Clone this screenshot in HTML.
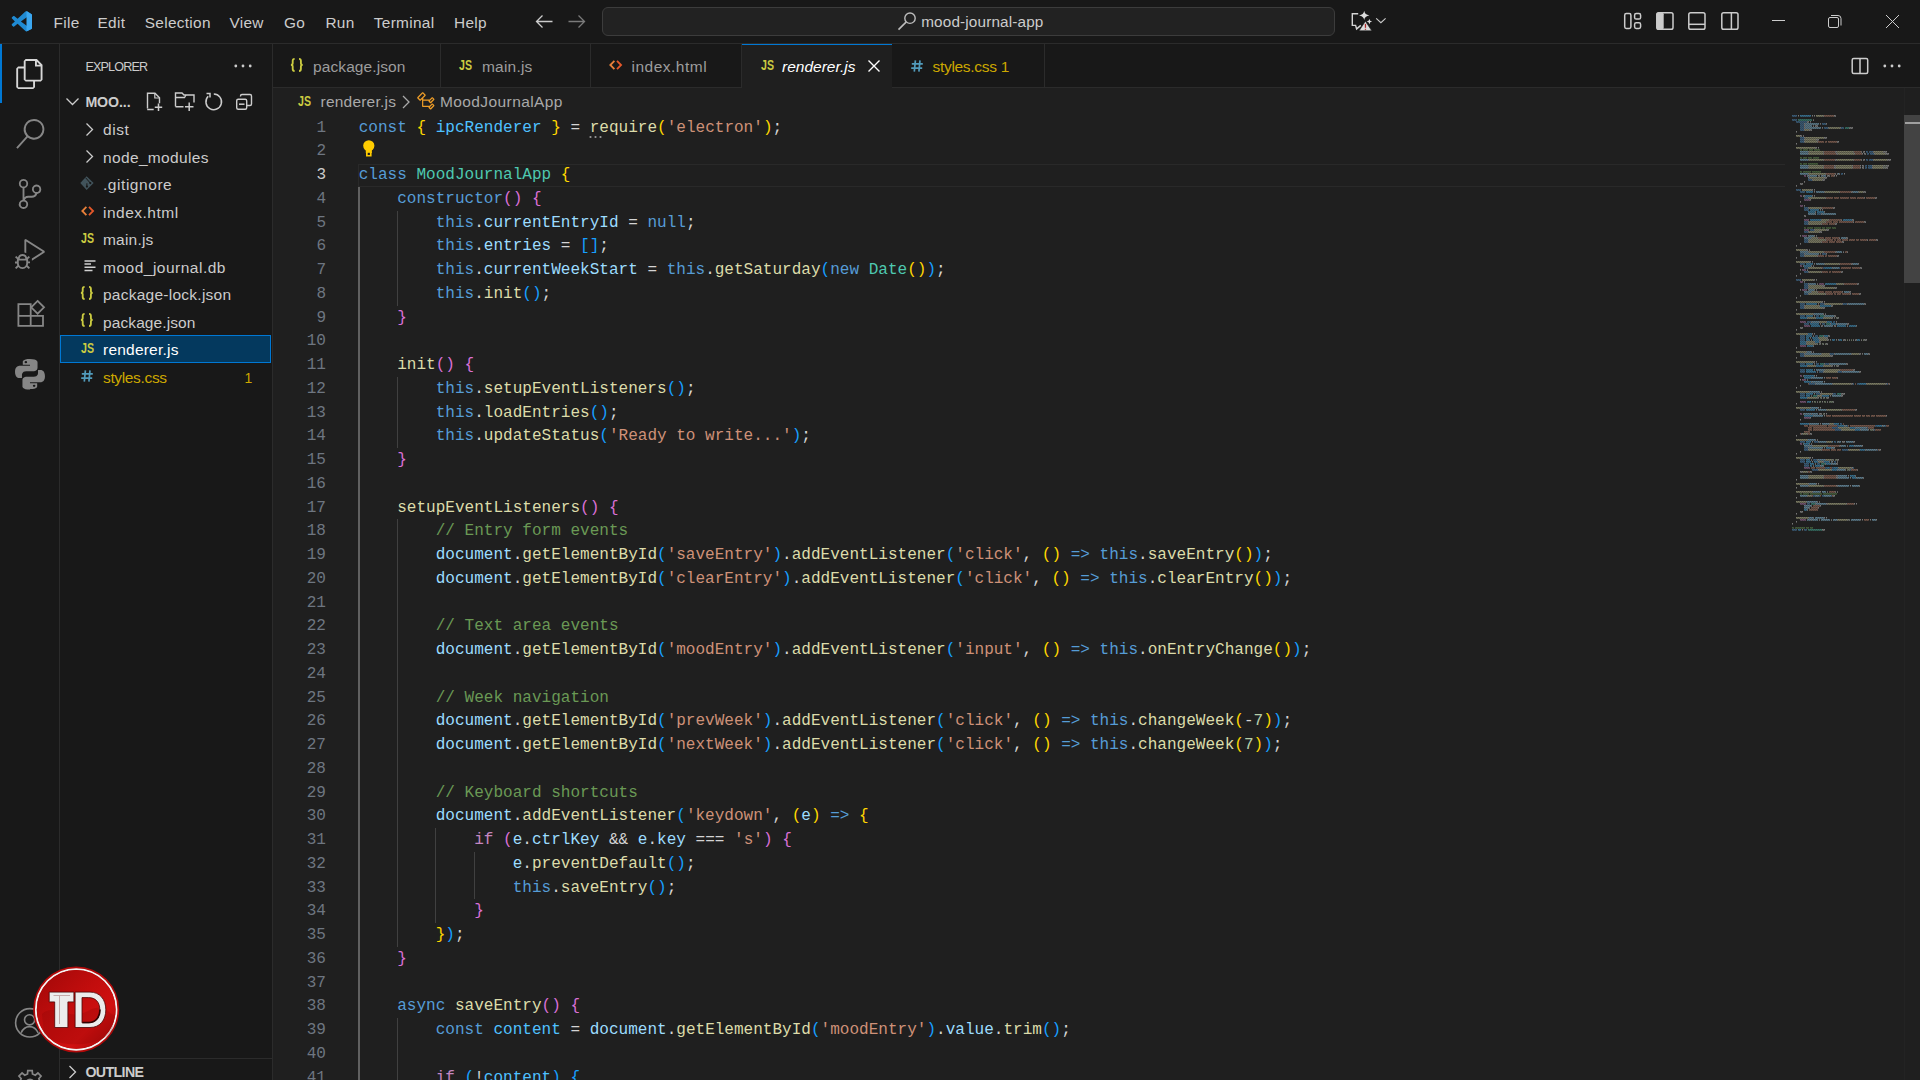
<!DOCTYPE html>
<html><head><meta charset="utf-8"><title>renderer.js - mood-journal-app</title>
<style>
*{margin:0;padding:0;box-sizing:content-box}
html,body{width:1920px;height:1080px;overflow:hidden;background:#181818;font-family:"Liberation Sans", sans-serif;}
.tx{position:absolute;white-space:pre;}
.box{position:absolute}
.ic{position:absolute;overflow:visible}
#editor{position:absolute;left:273px;top:88px;width:1647px;height:992px;background:#1f1f1f}
#gutter .num{position:absolute;left:280px;width:46px;text-align:right;font:16.04px/23.75px "Liberation Mono", monospace;color:#6e7681}
#gutter .num.act{color:#cccccc}
#code .ln{position:absolute;left:358.75px;white-space:pre;font:16.04px/23.75px "Liberation Mono", monospace;color:#d4d4d4}
.guide{position:absolute;width:1px;background:#404040}
.guide.act{background:#606060;width:2px}
.k{color:#569cd6}.c{color:#c586c0}.s{color:#ce9178}.f{color:#dcdcaa}.v{color:#9cdcfe}.n{color:#4fc1ff}.ty{color:#4ec9b0}
.m{color:#6a9955}.p{color:#d4d4d4}.nu{color:#b5cea8}.b0{color:#ffd700}.b1{color:#da70d6}.b2{color:#179fff}
</style></head>
<body>
<div class="box" style="left:0;top:43px;width:1920px;height:1px;background:#2b2b2b"></div>
<div class="box" style="left:59px;top:44px;width:1px;height:1036px;background:#2b2b2b"></div>
<div class="box" style="left:272px;top:44px;width:1px;height:1036px;background:#2b2b2b"></div>
<div id="editor"></div>
<svg class="ic" style="left:11.00px;top:10.50px" width="22" height="21" viewBox="0 0 21 21">
<path d="M17.6 1.1 13.3 -0.9 5.3 6.4 1.9 3.8 0.4 4.6v11.8l1.5 0.8 3.4-2.6 8 7.3 4.3-2.1V1.1z" fill="#0065a9" opacity="0"/>
<path d="M15.4 0.3a1.3 1.3 0 0 0-1.5 0.25L6.1 7.7 2.7 5.1a0.9 0.9 0 0 0-1.1 0.05l-1.1 1a0.9 0.9 0 0 0 0 1.3L3.4 10.5 0.5 13.1a0.9 0.9 0 0 0 0 1.3l1.1 1a0.9 0.9 0 0 0 1.1 0.05l3.4-2.6 7.8 7.15a1.3 1.3 0 0 0 1.5 0.25l4.3-2.05A1.3 1.3 0 0 0 20.5 16.9V4.1a1.3 1.3 0 0 0-0.75-1.15z" fill="#1f8ad2"/>
<path d="M15.6 15.1 9.4 10.5l6.2-4.6z" fill="#181818"/>
<path d="M15.4 0.3 19.75 2.95A1.3 1.3 0 0 1 20.5 4.1V16.9a1.3 1.3 0 0 1-0.75 1.15L15.4 20.2a1.3 1.3 0 0 1-0.4 0.1V0.2z" fill="#3ba7f0"/>
</svg>
<div class="tx" style="left:53.60px;top:13.36px;font-size:15.40px;line-height:20px;color:#cccccc;letter-spacing:0.30px;">File</div>
<div class="tx" style="left:97.50px;top:13.36px;font-size:15.40px;line-height:20px;color:#cccccc;letter-spacing:0.30px;">Edit</div>
<div class="tx" style="left:144.80px;top:13.36px;font-size:15.40px;line-height:20px;color:#cccccc;letter-spacing:0.30px;">Selection</div>
<div class="tx" style="left:229.40px;top:13.36px;font-size:15.40px;line-height:20px;color:#cccccc;letter-spacing:0.30px;">View</div>
<div class="tx" style="left:284.10px;top:13.36px;font-size:15.40px;line-height:20px;color:#cccccc;letter-spacing:0.30px;">Go</div>
<div class="tx" style="left:325.40px;top:13.36px;font-size:15.40px;line-height:20px;color:#cccccc;letter-spacing:0.30px;">Run</div>
<div class="tx" style="left:373.80px;top:13.36px;font-size:15.40px;line-height:20px;color:#cccccc;letter-spacing:0.30px;">Terminal</div>
<div class="tx" style="left:454.00px;top:13.36px;font-size:15.40px;line-height:20px;color:#cccccc;letter-spacing:0.30px;">Help</div>
<svg class="ic" style="left:534.00px;top:13.00px" width="20" height="17" viewBox="0 0 20 17"><path d="M2.5 8.5H18.5M8.5 2.5 2.5 8.5 8.5 14.5" stroke="#cccccc" stroke-width="1.3" fill="none"/></svg>
<svg class="ic" style="left:567.00px;top:13.00px" width="20" height="17" viewBox="0 0 20 17"><path d="M1.5 8.5H17.5M11.5 2.5 17.5 8.5 11.5 14.5" stroke="#7a7a7a" stroke-width="1.3" fill="none"/></svg>
<div class="box" style="left:602px;top:7px;width:731px;height:27px;border:1px solid #3c3c3c;border-radius:6px;background:#222222"></div>
<svg class="ic" style="left:896.00px;top:11.00px" width="22" height="20" viewBox="0 0 22 20"><circle cx="14" cy="7.2" r="5.2" stroke="#bdbdbd" stroke-width="1.4" fill="none"/><path d="M10.3 10.9 2.5 18.6" stroke="#bdbdbd" stroke-width="1.6"/></svg>
<div class="tx" style="left:921.20px;top:12.10px;font-size:15.30px;line-height:20px;color:#cccccc;letter-spacing:0.15px;">mood-journal-app</div>
<svg class="ic" style="left:1345.00px;top:6.00px" width="50" height="30" viewBox="0 0 50 30">
<path d="M13.2 7.7H7.3V19.4H10.6L11.6 22.9 15.8 19.4" stroke="#d4d4d4" stroke-width="1.4" fill="none" stroke-linejoin="miter"/>
<path d="M19.2 4.8Q19.7 8.8 24.4 9.4 19.7 10 19.2 14 18.7 10 14 9.4 18.7 8.8 19.2 4.8Z" fill="#dcdcdc"/>
<path d="M24.4 12.9Q24.7 15.3 27.1 15.6 24.7 15.9 24.4 18.3 24.1 15.9 21.7 15.6 24.1 15.3 24.4 12.9Z" fill="#dcdcdc"/>
<path d="M20.4 15.2 26.8 24.8H14.1Z" fill="#dcdcdc" stroke="#181818" stroke-width="0.6"/>
<rect x="19.8" y="17.9" width="1.3" height="3.9" fill="#a82828"/><rect x="19.8" y="22.8" width="1.3" height="1" fill="#a82828"/>
</svg>
<svg class="ic" style="left:1375.00px;top:16.00px" width="12" height="9" viewBox="0 0 12 9"><path d="M1.2 2.3 5.9 6.7 10.6 2.3" stroke="#cccccc" stroke-width="1.1" fill="none"/></svg>
<svg class="ic" style="left:1622.00px;top:11.00px" width="22" height="20" viewBox="0 0 22 20"><rect x="2.7" y="2.6" width="6.2" height="14.8" rx="1.6" stroke="#cccccc" stroke-width="1.5" fill="none"/><rect x="12.6" y="2.6" width="6" height="5.4" rx="1.6" stroke="#cccccc" stroke-width="1.5" fill="none"/><rect x="12.6" y="11.8" width="6" height="5.6" rx="1.6" stroke="#cccccc" stroke-width="1.5" fill="none"/></svg>
<svg class="ic" style="left:1654.00px;top:10.00px" width="22" height="22" viewBox="0 0 22 22"><rect x="2.8" y="2.8" width="16.2" height="16.4" rx="1.8" stroke="#cccccc" stroke-width="1.5" fill="none"/><rect x="2.5" y="2.5" width="7.2" height="17" rx="1.8" fill="#cccccc"/></svg>
<svg class="ic" style="left:1686.00px;top:10.00px" width="22" height="22" viewBox="0 0 22 22"><rect x="2.8" y="2.8" width="16.2" height="16.4" rx="1.8" stroke="#cccccc" stroke-width="1.5" fill="none"/><path d="M2.8 14.3H19" stroke="#cccccc" stroke-width="1.5"/></svg>
<svg class="ic" style="left:1719.00px;top:10.00px" width="22" height="22" viewBox="0 0 22 22"><rect x="2.8" y="2.8" width="16.2" height="16.4" rx="1.8" stroke="#cccccc" stroke-width="1.5" fill="none"/><path d="M12.4 2.8V19" stroke="#cccccc" stroke-width="1.5"/></svg>
<div class="box" style="left:1772px;top:20px;width:13px;height:1px;background:#cccccc"></div>
<svg class="ic" style="left:1826.00px;top:13.00px" width="18" height="17" viewBox="0 0 18 17"><rect x="2.5" y="4.5" width="10" height="10" rx="1.5" stroke="#cccccc" stroke-width="1" fill="none"/><path d="M5 2.5h7a3 3 0 0 1 3 3v7" stroke="#cccccc" stroke-width="1" fill="none"/></svg>
<svg class="ic" style="left:1884.00px;top:13.00px" width="17" height="17" viewBox="0 0 17 17"><path d="M2 2 15 15M15 2 2 15" stroke="#cccccc" stroke-width="1"/></svg>
<div class="box" style="left:0;top:44px;width:2px;height:59px;background:#0078d4"></div>
<svg class="ic" style="left:15.00px;top:58.70px" width="30" height="30" viewBox="0 0 24 24"><path d="M17.5 0h-9L7 1.5V6H2.5L1 7.5v15.07L2.5 24h12.07L16 22.57V18h4.7l1.3-1.43V4.5L17.5 0zm0 2.12l2.38 2.38H17.5V2.12zm-3 20.38h-12v-15H7v9.07L8.5 18h6v4.5zm6-6h-12v-15H16V6h4.5v10.5z" fill="#d7d7d7"/></svg>
<svg class="ic" style="left:14.75px;top:119.00px" width="30" height="30" viewBox="0 0 24 24"><path d="M15.25 0a8.25 8.25 0 0 0-6.18 13.72L1 22.88l1.12 1 8.05-9.12A8.251 8.251 0 1 0 15.25.01V0zm0 15a6.75 6.75 0 1 1 0-13.5 6.75 6.75 0 0 1 0 13.5z" fill="#868686"/></svg>
<svg class="ic" style="left:14.50px;top:179.30px" width="30" height="30" viewBox="0 0 24 24"><path d="M21.007 8.222A3.738 3.738 0 0 0 15.045 5.2a3.737 3.737 0 0 0 1.156 6.583 2.988 2.988 0 0 1-2.668 1.67h-2.99a4.456 4.456 0 0 0-2.989 1.165V7.4a3.737 3.737 0 1 0-1.494 0v9.117a3.776 3.776 0 1 0 1.816.099 2.99 2.99 0 0 1 2.668-1.667h2.99a4.484 4.484 0 0 0 4.223-3.039 3.736 3.736 0 0 0 3.25-3.687zM4.565 3.738a2.242 2.242 0 1 1 4.484 0 2.242 2.242 0 0 1-4.484 0zm4.484 16.441a2.242 2.242 0 1 1-4.484 0 2.242 2.242 0 0 1 4.484 0zm8.221-9.715a2.242 2.242 0 1 1 0-4.485 2.242 2.242 0 0 1 0 4.485z" fill="#868686"/></svg>
<svg class="ic" style="left:15.00px;top:239.00px" width="30" height="30" viewBox="0 0 24 24"><path d="M10.94 13.5l-1.32 1.32a3.73 3.73 0 0 0-7.24 0L1.06 13.5 0 14.56l1.72 1.72-.22.22V18H0v1.5h1.5v.08c.077.489.214.966.41 1.42L0 22.94 1.06 24l1.650-1.65A4.308 4.308 0 0 0 6 24a4.310 4.310 0 0 0 3.290-1.65L10.94 24 12 22.940 10.090 21c.198-.464.336-.951.410-1.450v-.1H12V18h-1.5v-1.5l-.22-.22L12 14.560l-1.060-1.060zM6 13.5a2.250 2.250 0 0 1 2.250 2.250h-4.5A2.250 2.250 0 0 1 6 13.5zm3 6a3.330 3.330 0 0 1-3 3 3.330 3.330 0 0 1-3-3v-2.250h6v2.250zm14.760-9.9v1.260L13.5 17.370V15.6l8.5-5.370L9 2v9.460a5.070 5.070 0 0 0-1.5-.720V.630L8.640 0l15.120 9.6z" fill="#868686"/></svg>
<svg class="ic" style="left:15.00px;top:297.00px" width="32" height="34" viewBox="0 0 32 34"><path d="M3.4 7.2h12.3v11.7H3.4zM3.4 18.9h12.3v10H3.4zM15.7 18.9H28v10H15.7z" stroke="#868686" stroke-width="1.8" fill="none"/><path d="M22.6 3.9 29 10.3 22.6 16.7 16.2 10.3z" stroke="#868686" stroke-width="1.8" fill="none"/></svg>
<svg class="ic" style="left:13.00px;top:355.00px" width="34" height="36" viewBox="0 0 34 36">
<g transform="translate(-1.54,1.76) scale(1.18,1.02)"><path d="M15.6 2.2c-6.4 0-6 2.8-6 2.8v2.9h6.1v0.9H7.2S3 8.3 3 14.7s3.7 6.2 3.7 6.2h2.2v-3s-0.1-3.7 3.6-3.7h6.1s3.5 0.1 3.5-3.4V5.6s0.5-3.4-6.5-3.4zm-3.4 2a1.1 1.1 0 1 1 0 2.2 1.1 1.1 0 0 1 0-2.2z" fill="#868686"/>
<path d="M15.8 31.6c6.4 0 6-2.8 6-2.8v-2.9h-6.1v-0.9h8.5s4.2 0.5 4.2-5.9-3.7-6.2-3.7-6.2h-2.2v3s0.1 3.7-3.6 3.7h-6.1s-3.5-0.1-3.5 3.4v5.8s-0.5 3.4 6.5 3.4zm3.4-2a1.1 1.1 0 1 1 0-2.2 1.1 1.1 0 0 1 0 2.2z" fill="#868686"/></g>
</svg>
<svg class="ic" style="left:14.00px;top:1007.00px" width="32" height="32" viewBox="0 0 32 32"><circle cx="15.8" cy="15.8" r="14.2" stroke="#868686" stroke-width="1.6" fill="none"/><circle cx="15.6" cy="12.8" r="5.1" stroke="#868686" stroke-width="1.6" fill="none"/><path d="M7.2 25.8C9 21.5 12 19.6 15.6 19.6S22.2 21.5 24.2 25.8" stroke="#868686" stroke-width="1.6" fill="none"/></svg>
<svg class="ic" style="left:15.00px;top:1068.50px" width="30" height="30" viewBox="0 0 30 30"><path d="M12.52 5.00 L12.77 1.58 L17.23 1.58 L17.48 5.00 L20.31 6.18 L22.91 3.93 L26.07 7.09 L23.82 9.69 L25.00 12.52 L28.42 12.77 L28.42 17.23 L25.00 17.48 L23.82 20.31 L26.07 22.91 L22.91 26.07 L20.31 23.82 L17.48 25.00 L17.23 28.42 L12.77 28.42 L12.52 25.00 L9.69 23.82 L7.09 26.07 L3.93 22.91 L6.18 20.31 L5.00 17.48 L1.58 17.23 L1.58 12.77 L5.00 12.52 L6.18 9.69 L3.93 7.09 L7.09 3.93 L9.69 6.18Z" stroke="#868686" stroke-width="1.7" fill="none" stroke-linejoin="miter"/><circle cx="15" cy="15" r="4.6" stroke="#868686" stroke-width="1.7" fill="none"/></svg>
<div class="tx" style="left:85.40px;top:58.93px;font-size:12.60px;line-height:16px;color:#cccccc;letter-spacing:-0.85px;">EXPLORER</div>
<svg class="ic" style="left:233.00px;top:63.00px" width="20" height="6" viewBox="0 0 20 6"><circle cx="2.8" cy="3" r="1.4" fill="#cccccc"/><circle cx="10" cy="3" r="1.4" fill="#cccccc"/><circle cx="17.2" cy="3" r="1.4" fill="#cccccc"/></svg>
<svg class="ic" style="left:64.00px;top:96.00px" width="17" height="11" viewBox="0 0 17 11"><path d="M2.5 2.5 8.5 8.5 14.5 2.5" stroke="#cccccc" stroke-width="1.3" fill="none"/></svg>
<div class="tx" style="left:85.40px;top:92.68px;font-size:14.20px;line-height:18px;color:#cccccc;font-weight:700;letter-spacing:-0.10px;">MOO...</div>
<svg class="ic" style="left:144.00px;top:90.00px" width="22" height="23" viewBox="0 0 22 23"><path d="M3.5 18.5V3.2h7.5l4.5 4.5v5.5" stroke="#cccccc" stroke-width="1.4" fill="none"/><path d="M10.8 3v5h5" stroke="#cccccc" stroke-width="1.2" fill="none"/><path d="M3.2 19.5h6.5M14.5 13.5v7.5M10.8 17.2h7.4" stroke="#cccccc" stroke-width="1.5" fill="none"/></svg>
<svg class="ic" style="left:173.00px;top:90.00px" width="24" height="23" viewBox="0 0 24 23"><path d="M2.5 16.5V3h6.5l2 2h10v7.5" stroke="#cccccc" stroke-width="1.4" fill="none"/><path d="M2.5 7.5h9l1.5-2.5" stroke="#cccccc" stroke-width="1.3" fill="none"/><path d="M2.5 16.8h8M16.2 12.5v8.5M12 16.8h8.5" stroke="#cccccc" stroke-width="1.5" fill="none"/></svg>
<svg class="ic" style="left:204.00px;top:91.00px" width="20" height="21" viewBox="0 0 20 21"><path d="M4.2 5.3A7.8 7.8 0 1 0 9.8 3" stroke="#cccccc" stroke-width="1.5" fill="none"/><path d="M2.5 2.5h3.5v4" stroke="#cccccc" stroke-width="1.5" fill="none"/></svg>
<svg class="ic" style="left:234.00px;top:92.00px" width="20" height="20" viewBox="0 0 20 20"><rect x="2.7" y="7.2" width="10" height="10" rx="1.5" stroke="#cccccc" stroke-width="1.4" fill="none"/><path d="M6.5 4.5V4a1.5 1.5 0 0 1 1.5-1.5h8a1.5 1.5 0 0 1 1.5 1.5v8a1.5 1.5 0 0 1-1.5 1.5H13" stroke="#cccccc" stroke-width="1.4" fill="none"/><path d="M5 12.2h5.5" stroke="#cccccc" stroke-width="1.5"/></svg>
<svg class="ic" style="left:84.00px;top:121.75px" width="12" height="15" viewBox="0 0 12 15"><path d="M2.5 1.5 8.5 7.5 2.5 13.5" stroke="#cccccc" stroke-width="1.3" fill="none"/></svg>
<div class="tx" style="left:103.00px;top:120.18px;font-size:15.50px;line-height:20px;color:#cccccc;letter-spacing:0.60px;">dist</div>
<svg class="ic" style="left:84.00px;top:149.25px" width="12" height="15" viewBox="0 0 12 15"><path d="M2.5 1.5 8.5 7.5 2.5 13.5" stroke="#cccccc" stroke-width="1.3" fill="none"/></svg>
<div class="tx" style="left:103.00px;top:147.68px;font-size:15.50px;line-height:20px;color:#cccccc;letter-spacing:0.35px;">node_modules</div>
<svg class="ic" style="left:79.00px;top:175.75px" width="16" height="16" viewBox="0 0 16 16"><path d="M7.6 0.35 14.6 7.05 7.6 14.05 1.3 7.05z" fill="#41535b"/><path d="M6.6 1.75 11.3 7.05M7.9 7.3V10.5" stroke="#181818" stroke-width="1"/><circle cx="7.9" cy="10.6" r="1.1" fill="#181818"/><circle cx="11.3" cy="7.05" r="1.1" fill="#181818"/></svg>
<div class="tx" style="left:103.00px;top:175.18px;font-size:15.50px;line-height:20px;color:#cccccc;letter-spacing:0.55px;">.gitignore</div>
<svg class="ic" style="left:80.80px;top:206.15px" width="14" height="11" viewBox="0 0 14 11"><path d="M5.4 0.8 1.3 5 5.4 9.2" stroke="#e8803a" stroke-width="1.8" fill="none"/><path d="M8 0.8 12.1 5 8 9.2" stroke="#e5582a" stroke-width="1.8" fill="none"/></svg>
<div class="tx" style="left:103.00px;top:202.68px;font-size:15.50px;line-height:20px;color:#cccccc;letter-spacing:0.50px;">index.html</div>
<svg class="ic" style="left:81.00px;top:232.55px" width="14" height="12" viewBox="0 0 14 12"><text x="0" y="10.4" font-family="Liberation Sans" font-size="14.5" font-weight="700" textLength="13" lengthAdjust="spacingAndGlyphs" fill="#cbcb41">JS</text></svg>
<div class="tx" style="left:103.00px;top:230.18px;font-size:15.50px;line-height:20px;color:#cccccc;letter-spacing:0.20px;">main.js</div>
<svg class="ic" style="left:83.50px;top:260.25px" width="13" height="12" viewBox="0 0 13 12"><path d="M0.5 0.9h11M0.5 4.1h6.5M0.5 7.3h11M0.5 10.4h8" stroke="#d0d0d0" stroke-width="1.5"/></svg>
<div class="tx" style="left:103.00px;top:257.68px;font-size:15.50px;line-height:20px;color:#cccccc;letter-spacing:0.50px;">mood_journal.db</div>
<svg class="ic" style="left:80.40px;top:285.65px" width="14" height="14" viewBox="0 0 14 14"><path d="M4.6 0.8C3.2 0.8 2.7 1.4 2.7 2.8V5.3C2.7 6.3 2 6.9 0.9 6.9 2 6.9 2.7 7.5 2.7 8.5V11C2.7 12.4 3.2 13 4.6 13" stroke="#cbcb41" stroke-width="1.85" fill="none"/><g transform="translate(13.6,0) scale(-1,1)"><path d="M4.6 0.8C3.2 0.8 2.7 1.4 2.7 2.8V5.3C2.7 6.3 2 6.9 0.9 6.9 2 6.9 2.7 7.5 2.7 8.5V11C2.7 12.4 3.2 13 4.6 13" stroke="#cbcb41" stroke-width="1.85" fill="none"/></g></svg>
<div class="tx" style="left:103.00px;top:285.18px;font-size:15.50px;line-height:20px;color:#cccccc;letter-spacing:0.25px;">package-lock.json</div>
<svg class="ic" style="left:80.40px;top:313.15px" width="14" height="14" viewBox="0 0 14 14"><path d="M4.6 0.8C3.2 0.8 2.7 1.4 2.7 2.8V5.3C2.7 6.3 2 6.9 0.9 6.9 2 6.9 2.7 7.5 2.7 8.5V11C2.7 12.4 3.2 13 4.6 13" stroke="#cbcb41" stroke-width="1.85" fill="none"/><g transform="translate(13.6,0) scale(-1,1)"><path d="M4.6 0.8C3.2 0.8 2.7 1.4 2.7 2.8V5.3C2.7 6.3 2 6.9 0.9 6.9 2 6.9 2.7 7.5 2.7 8.5V11C2.7 12.4 3.2 13 4.6 13" stroke="#cbcb41" stroke-width="1.85" fill="none"/></g></svg>
<div class="tx" style="left:103.00px;top:312.68px;font-size:15.50px;line-height:20px;color:#cccccc;letter-spacing:0.10px;">package.json</div>
<div class="box" style="left:60px;top:335px;width:209px;height:26px;border:1px solid #0078d4;background:#04395e"></div>
<svg class="ic" style="left:81.00px;top:342.55px" width="14" height="12" viewBox="0 0 14 12"><text x="0" y="10.4" font-family="Liberation Sans" font-size="14.5" font-weight="700" textLength="13" lengthAdjust="spacingAndGlyphs" fill="#cbcb41">JS</text></svg>
<div class="tx" style="left:103.00px;top:340.18px;font-size:15.50px;line-height:20px;color:#ffffff;letter-spacing:0.22px;">renderer.js</div>
<svg class="ic" style="left:80.60px;top:369.95px" width="13" height="12" viewBox="0 0 13 12"><path d="M4.4 0.3 3.3 11.7M9 0.3 7.9 11.7M0.8 3.9H11.8M0.2 8.1H11.2" stroke="#519aba" stroke-width="1.7" fill="none"/></svg>
<div class="tx" style="left:103.00px;top:367.68px;font-size:15.50px;line-height:20px;color:#cca700;letter-spacing:-0.35px;">styles.css</div>
<div class="tx" style="left:244.50px;top:368.70px;font-size:14.00px;line-height:18px;color:#cca700;">1</div>
<div class="box" style="left:60px;top:1058px;width:212px;height:1px;background:#2b2b2b"></div>
<svg class="ic" style="left:67.00px;top:1064.00px" width="12" height="16" viewBox="0 0 12 16"><path d="M2.5 2 8.5 8 2.5 14" stroke="#cccccc" stroke-width="1.3" fill="none"/></svg>
<div class="tx" style="left:85.40px;top:1062.58px;font-size:14.20px;line-height:18px;color:#cccccc;font-weight:700;letter-spacing:-0.60px;">OUTLINE</div>
<div class="box" style="left:273px;top:87px;width:1647px;height:1px;background:#2b2b2b"></div>
<div class="box" style="left:440px;top:44px;width:1px;height:43px;background:#2b2b2b"></div>
<div class="box" style="left:590px;top:44px;width:1px;height:43px;background:#2b2b2b"></div>
<div class="box" style="left:741px;top:44px;width:1px;height:43px;background:#2b2b2b"></div>
<div class="box" style="left:742px;top:44px;width:150px;height:44px;background:#1f1f1f;border-top:1px solid #0078d4;box-sizing:border-box"></div>
<div class="box" style="left:1044px;top:44px;width:1px;height:43px;background:#2b2b2b"></div>
<svg class="ic" style="left:290.20px;top:58.00px" width="14" height="14" viewBox="0 0 14 14"><path d="M4.6 0.8C3.2 0.8 2.7 1.4 2.7 2.8V5.3C2.7 6.3 2 6.9 0.9 6.9 2 6.9 2.7 7.5 2.7 8.5V11C2.7 12.4 3.2 13 4.6 13" stroke="#cbcb41" stroke-width="1.85" fill="none"/><g transform="translate(13.6,0) scale(-1,1)"><path d="M4.6 0.8C3.2 0.8 2.7 1.4 2.7 2.8V5.3C2.7 6.3 2 6.9 0.9 6.9 2 6.9 2.7 7.5 2.7 8.5V11C2.7 12.4 3.2 13 4.6 13" stroke="#cbcb41" stroke-width="1.85" fill="none"/></g></svg>
<div class="tx" style="left:313.00px;top:56.73px;font-size:15.50px;line-height:20px;color:#9d9d9d;letter-spacing:0.10px;">package.json</div>
<svg class="ic" style="left:459.30px;top:60.00px" width="14" height="12" viewBox="0 0 14 12"><text x="0" y="10.4" font-family="Liberation Sans" font-size="14.5" font-weight="700" textLength="13" lengthAdjust="spacingAndGlyphs" fill="#cbcb41">JS</text></svg>
<div class="tx" style="left:482.00px;top:56.73px;font-size:15.50px;line-height:20px;color:#9d9d9d;letter-spacing:0.20px;">main.js</div>
<svg class="ic" style="left:608.50px;top:60.30px" width="14" height="11" viewBox="0 0 14 11"><path d="M5.4 0.8 1.3 5 5.4 9.2" stroke="#e8803a" stroke-width="1.8" fill="none"/><path d="M8 0.8 12.1 5 8 9.2" stroke="#e5582a" stroke-width="1.8" fill="none"/></svg>
<div class="tx" style="left:631.50px;top:56.73px;font-size:15.50px;line-height:20px;color:#9d9d9d;letter-spacing:0.50px;">index.html</div>
<svg class="ic" style="left:761.00px;top:60.00px" width="14" height="12" viewBox="0 0 14 12"><text x="0" y="10.4" font-family="Liberation Sans" font-size="14.5" font-weight="700" textLength="13" lengthAdjust="spacingAndGlyphs" fill="#cbcb41">JS</text></svg>
<div class="tx" style="left:782.00px;top:56.73px;font-size:15.50px;line-height:20px;color:#ffffff;font-style:italic;">renderer.js</div>
<svg class="ic" style="left:866.00px;top:58.00px" width="16" height="16" viewBox="0 0 16 16"><path d="M2.5 2.5 13.5 13.5M13.5 2.5 2.5 13.5" stroke="#ffffff" stroke-width="1.4"/></svg>
<svg class="ic" style="left:911.00px;top:60.00px" width="13" height="12" viewBox="0 0 13 12"><path d="M4.4 0.3 3.3 11.7M9 0.3 7.9 11.7M0.8 3.9H11.8M0.2 8.1H11.2" stroke="#519aba" stroke-width="1.7" fill="none"/></svg>
<div class="tx" style="left:932.50px;top:56.73px;font-size:15.50px;line-height:20px;color:#cca700;letter-spacing:-0.30px;">styles.css 1</div>
<svg class="ic" style="left:1850.00px;top:56.00px" width="20" height="20" viewBox="0 0 20 20"><rect x="2.2" y="2.5" width="15.5" height="15" rx="1.5" stroke="#cccccc" stroke-width="1.5" fill="none"/><path d="M10 2.5V17.5" stroke="#cccccc" stroke-width="1.5"/></svg>
<svg class="ic" style="left:1882.00px;top:63.00px" width="20" height="6" viewBox="0 0 20 6"><circle cx="2.8" cy="3" r="1.4" fill="#cccccc"/><circle cx="10" cy="3" r="1.4" fill="#cccccc"/><circle cx="17.2" cy="3" r="1.4" fill="#cccccc"/></svg>
<svg class="ic" style="left:298.30px;top:95.50px" width="14" height="12" viewBox="0 0 14 12"><text x="0" y="10.4" font-family="Liberation Sans" font-size="14.5" font-weight="700" textLength="13" lengthAdjust="spacingAndGlyphs" fill="#cbcb41">JS</text></svg>
<div class="tx" style="left:320.50px;top:92.13px;font-size:15.50px;line-height:20px;color:#a9a9a9;letter-spacing:0.22px;">renderer.js</div>
<svg class="ic" style="left:400.00px;top:94.00px" width="12" height="16" viewBox="0 0 12 16"><path d="M3 2 9 8 3 14" stroke="#a9a9a9" stroke-width="1.3" fill="none"/></svg>
<svg class="ic" style="left:415.75px;top:91.00px" width="20" height="20" viewBox="0 0 16 16"><path d="M11.34 9.71h.71l2.67-2.67v-.71L13.38 5h-.7l-1.82 1.81h-5V5.56l1.86-1.85V3l-2-2H5L1 5v.71l2 2h.71l1.14-1.15v5.790l.5.5H10v.52l1.33 1.34h.71l2.67-2.67v-.71L13.37 10h-.7l-1.86 1.85h-5v-4H10v.48l1.34 1.38zm1.69-3.650l.63.63-2 2-.63-.63 2-2zm0 5l.63.63-2 2-.63-.63 2-2zM3.35 6.65L2.06 5.36 5.37 2.06 6.650 3.35l-3.3 3.3z" fill="#ee9d28"/></svg>
<div class="tx" style="left:440.00px;top:92.13px;font-size:15.50px;line-height:20px;color:#a9a9a9;letter-spacing:0.40px;">MoodJournalApp</div>
<div class="box" style="left:358px;top:163.5px;width:1426px;height:21px;border:1.25px solid #292929;border-right:none"></div>
<div class="guide act" style="left:358.00px;top:186.85px;height:904.50px"></div>
<div class="guide" style="left:396.75px;top:210.60px;height:95.00px"></div>
<div class="guide" style="left:396.75px;top:376.85px;height:71.25px"></div>
<div class="guide" style="left:396.75px;top:519.35px;height:427.50px"></div>
<div class="guide" style="left:396.75px;top:1018.10px;height:73.25px"></div>
<div class="guide" style="left:435.25px;top:828.10px;height:95.00px"></div>
<div class="guide" style="left:473.75px;top:851.85px;height:47.50px"></div>
<div id="gutter"><div class="num" style="top:116.50px">1</div><div class="num" style="top:140.25px">2</div><div class="num act" style="top:164.00px">3</div><div class="num" style="top:187.75px">4</div><div class="num" style="top:211.50px">5</div><div class="num" style="top:235.25px">6</div><div class="num" style="top:259.00px">7</div><div class="num" style="top:282.75px">8</div><div class="num" style="top:306.50px">9</div><div class="num" style="top:330.25px">10</div><div class="num" style="top:354.00px">11</div><div class="num" style="top:377.75px">12</div><div class="num" style="top:401.50px">13</div><div class="num" style="top:425.25px">14</div><div class="num" style="top:449.00px">15</div><div class="num" style="top:472.75px">16</div><div class="num" style="top:496.50px">17</div><div class="num" style="top:520.25px">18</div><div class="num" style="top:544.00px">19</div><div class="num" style="top:567.75px">20</div><div class="num" style="top:591.50px">21</div><div class="num" style="top:615.25px">22</div><div class="num" style="top:639.00px">23</div><div class="num" style="top:662.75px">24</div><div class="num" style="top:686.50px">25</div><div class="num" style="top:710.25px">26</div><div class="num" style="top:734.00px">27</div><div class="num" style="top:757.75px">28</div><div class="num" style="top:781.50px">29</div><div class="num" style="top:805.25px">30</div><div class="num" style="top:829.00px">31</div><div class="num" style="top:852.75px">32</div><div class="num" style="top:876.50px">33</div><div class="num" style="top:900.25px">34</div><div class="num" style="top:924.00px">35</div><div class="num" style="top:947.75px">36</div><div class="num" style="top:971.50px">37</div><div class="num" style="top:995.25px">38</div><div class="num" style="top:1019.00px">39</div><div class="num" style="top:1042.75px">40</div><div class="num" style="top:1066.50px">41</div></div>
<div id="code"><div class="ln" style="top:116.50px"><span class="k">const</span> <span class="b0">{</span> <span class="n">ipcRenderer</span> <span class="b0">}</span> <span class="p">=</span> <span class="f">require</span><span class="b0">(</span><span class="s">'electron'</span><span class="b0">)</span><span class="p">;</span></div><div class="ln" style="top:140.25px"></div><div class="ln" style="top:164.00px"><span class="k">class</span> <span class="ty">MoodJournalApp</span> <span class="b0">{</span></div><div class="ln" style="top:187.75px">    <span class="k">constructor</span><span class="b1">(</span><span class="b1">)</span> <span class="b1">{</span></div><div class="ln" style="top:211.50px">        <span class="k">this</span><span class="p">.</span><span class="v">currentEntryId</span> <span class="p">=</span> <span class="k">null</span><span class="p">;</span></div><div class="ln" style="top:235.25px">        <span class="k">this</span><span class="p">.</span><span class="v">entries</span> <span class="p">=</span> <span class="b2">[</span><span class="b2">]</span><span class="p">;</span></div><div class="ln" style="top:259.00px">        <span class="k">this</span><span class="p">.</span><span class="v">currentWeekStart</span> <span class="p">=</span> <span class="k">this</span><span class="p">.</span><span class="f">getSaturday</span><span class="b2">(</span><span class="k">new</span> <span class="ty">Date</span><span class="b0">(</span><span class="b0">)</span><span class="b2">)</span><span class="p">;</span></div><div class="ln" style="top:282.75px">        <span class="k">this</span><span class="p">.</span><span class="f">init</span><span class="b2">(</span><span class="b2">)</span><span class="p">;</span></div><div class="ln" style="top:306.50px">    <span class="b1">}</span></div><div class="ln" style="top:330.25px"></div><div class="ln" style="top:354.00px">    <span class="f">init</span><span class="b1">(</span><span class="b1">)</span> <span class="b1">{</span></div><div class="ln" style="top:377.75px">        <span class="k">this</span><span class="p">.</span><span class="f">setupEventListeners</span><span class="b2">(</span><span class="b2">)</span><span class="p">;</span></div><div class="ln" style="top:401.50px">        <span class="k">this</span><span class="p">.</span><span class="f">loadEntries</span><span class="b2">(</span><span class="b2">)</span><span class="p">;</span></div><div class="ln" style="top:425.25px">        <span class="k">this</span><span class="p">.</span><span class="f">updateStatus</span><span class="b2">(</span><span class="s">'Ready to write...'</span><span class="b2">)</span><span class="p">;</span></div><div class="ln" style="top:449.00px">    <span class="b1">}</span></div><div class="ln" style="top:472.75px"></div><div class="ln" style="top:496.50px">    <span class="f">setupEventListeners</span><span class="b1">(</span><span class="b1">)</span> <span class="b1">{</span></div><div class="ln" style="top:520.25px">        <span class="m">// Entry form events</span></div><div class="ln" style="top:544.00px">        <span class="v">document</span><span class="p">.</span><span class="f">getElementById</span><span class="b2">(</span><span class="s">'saveEntry'</span><span class="b2">)</span><span class="p">.</span><span class="f">addEventListener</span><span class="b2">(</span><span class="s">'click'</span><span class="p">,</span> <span class="b0">(</span><span class="b0">)</span> <span class="k">=&gt;</span> <span class="k">this</span><span class="p">.</span><span class="f">saveEntry</span><span class="b0">(</span><span class="b0">)</span><span class="b2">)</span><span class="p">;</span></div><div class="ln" style="top:567.75px">        <span class="v">document</span><span class="p">.</span><span class="f">getElementById</span><span class="b2">(</span><span class="s">'clearEntry'</span><span class="b2">)</span><span class="p">.</span><span class="f">addEventListener</span><span class="b2">(</span><span class="s">'click'</span><span class="p">,</span> <span class="b0">(</span><span class="b0">)</span> <span class="k">=&gt;</span> <span class="k">this</span><span class="p">.</span><span class="f">clearEntry</span><span class="b0">(</span><span class="b0">)</span><span class="b2">)</span><span class="p">;</span></div><div class="ln" style="top:591.50px"></div><div class="ln" style="top:615.25px">        <span class="m">// Text area events</span></div><div class="ln" style="top:639.00px">        <span class="v">document</span><span class="p">.</span><span class="f">getElementById</span><span class="b2">(</span><span class="s">'moodEntry'</span><span class="b2">)</span><span class="p">.</span><span class="f">addEventListener</span><span class="b2">(</span><span class="s">'input'</span><span class="p">,</span> <span class="b0">(</span><span class="b0">)</span> <span class="k">=&gt;</span> <span class="k">this</span><span class="p">.</span><span class="f">onEntryChange</span><span class="b0">(</span><span class="b0">)</span><span class="b2">)</span><span class="p">;</span></div><div class="ln" style="top:662.75px"></div><div class="ln" style="top:686.50px">        <span class="m">// Week navigation</span></div><div class="ln" style="top:710.25px">        <span class="v">document</span><span class="p">.</span><span class="f">getElementById</span><span class="b2">(</span><span class="s">'prevWeek'</span><span class="b2">)</span><span class="p">.</span><span class="f">addEventListener</span><span class="b2">(</span><span class="s">'click'</span><span class="p">,</span> <span class="b0">(</span><span class="b0">)</span> <span class="k">=&gt;</span> <span class="k">this</span><span class="p">.</span><span class="f">changeWeek</span><span class="b0">(</span><span class="p">-</span><span class="nu">7</span><span class="b0">)</span><span class="b2">)</span><span class="p">;</span></div><div class="ln" style="top:734.00px">        <span class="v">document</span><span class="p">.</span><span class="f">getElementById</span><span class="b2">(</span><span class="s">'nextWeek'</span><span class="b2">)</span><span class="p">.</span><span class="f">addEventListener</span><span class="b2">(</span><span class="s">'click'</span><span class="p">,</span> <span class="b0">(</span><span class="b0">)</span> <span class="k">=&gt;</span> <span class="k">this</span><span class="p">.</span><span class="f">changeWeek</span><span class="b0">(</span><span class="nu">7</span><span class="b0">)</span><span class="b2">)</span><span class="p">;</span></div><div class="ln" style="top:757.75px"></div><div class="ln" style="top:781.50px">        <span class="m">// Keyboard shortcuts</span></div><div class="ln" style="top:805.25px">        <span class="v">document</span><span class="p">.</span><span class="f">addEventListener</span><span class="b2">(</span><span class="s">'keydown'</span><span class="p">,</span> <span class="b0">(</span><span class="v">e</span><span class="b0">)</span> <span class="k">=&gt;</span> <span class="b0">{</span></div><div class="ln" style="top:829.00px">            <span class="c">if</span> <span class="b1">(</span><span class="v">e</span><span class="p">.</span><span class="v">ctrlKey</span> <span class="p">&amp;&amp;</span> <span class="v">e</span><span class="p">.</span><span class="v">key</span> <span class="p">===</span> <span class="s">'s'</span><span class="b1">)</span> <span class="b1">{</span></div><div class="ln" style="top:852.75px">                <span class="v">e</span><span class="p">.</span><span class="f">preventDefault</span><span class="b2">(</span><span class="b2">)</span><span class="p">;</span></div><div class="ln" style="top:876.50px">                <span class="k">this</span><span class="p">.</span><span class="f">saveEntry</span><span class="b2">(</span><span class="b2">)</span><span class="p">;</span></div><div class="ln" style="top:900.25px">            <span class="b1">}</span></div><div class="ln" style="top:924.00px">        <span class="b0">}</span><span class="b2">)</span><span class="p">;</span></div><div class="ln" style="top:947.75px">    <span class="b1">}</span></div><div class="ln" style="top:971.50px"></div><div class="ln" style="top:995.25px">    <span class="k">async</span> <span class="f">saveEntry</span><span class="b1">(</span><span class="b1">)</span> <span class="b1">{</span></div><div class="ln" style="top:1019.00px">        <span class="k">const</span> <span class="n">content</span> <span class="p">=</span> <span class="v">document</span><span class="p">.</span><span class="f">getElementById</span><span class="b2">(</span><span class="s">'moodEntry'</span><span class="b2">)</span><span class="p">.</span><span class="v">value</span><span class="p">.</span><span class="f">trim</span><span class="b2">(</span><span class="b2">)</span><span class="p">;</span></div><div class="ln" style="top:1042.75px"></div><div class="ln" style="top:1066.50px">        <span class="c">if</span> <span class="b2">(</span><span class="p">!</span><span class="n">content</span><span class="b2">)</span> <span class="b2">{</span></div></div>
<svg class="ic" style="left:361.00px;top:139.00px" width="16" height="19" viewBox="0 0 16 19"><circle cx="7.8" cy="6.8" r="5.6" fill="#ffcc00"/><rect x="4.8" y="10" width="6" height="4" fill="#ffcc00"/><rect x="5" y="12.3" width="5.6" height="5.2" fill="#ffcc00"/><rect x="6.7" y="13.8" width="2.2" height="2.2" fill="#1f1f1f"/></svg>
<svg class="ic" style="left:589.00px;top:134.60px" width="14" height="4" viewBox="0 0 14 4"><circle cx="1.5" cy="2" r="1.1" fill="#9a9a9a"/><circle cx="6.5" cy="2" r="1.1" fill="#9a9a9a"/><circle cx="11.5" cy="2" r="1.1" fill="#9a9a9a"/></svg>
<svg class="ic" style="left:1792px;top:115px" width="112" height="420" viewBox="0 0 112 420"><defs><pattern id="mmp" width="2" height="2" patternUnits="userSpaceOnUse"><rect width="1" height="1" fill="#fff"/><rect x="1" width="1" height="1" fill="#bbb"/><rect y="1" width="1" height="1" fill="#999"/><rect x="1" y="1" width="1" height="1" fill="#ddd"/></pattern><mask id="mmm"><rect width="112" height="420" fill="url(#mmp)"/></mask></defs><g opacity="0.55" mask="url(#mmm)"><rect x="0" y="0.1" width="5" height="1.7" fill="#569cd6"/><rect x="6" y="0.1" width="1" height="1.7" fill="#d4d4d4"/><rect x="8" y="0.1" width="11" height="1.7" fill="#4fc1ff"/><rect x="20" y="0.1" width="1" height="1.7" fill="#d4d4d4"/><rect x="22" y="0.1" width="1" height="1.7" fill="#d4d4d4"/><rect x="24" y="0.1" width="7" height="1.7" fill="#dcdcaa"/><rect x="31" y="0.1" width="1" height="1.7" fill="#d4d4d4"/><rect x="32" y="0.1" width="10" height="1.7" fill="#ce9178"/><rect x="42" y="0.1" width="1" height="1.7" fill="#d4d4d4"/><rect x="43" y="0.1" width="1" height="1.7" fill="#d4d4d4"/><rect x="0" y="4.2" width="5" height="1.7" fill="#569cd6"/><rect x="6" y="4.2" width="14" height="1.7" fill="#4ec9b0"/><rect x="21" y="4.2" width="1" height="1.7" fill="#d4d4d4"/><rect x="4" y="6.2" width="11" height="1.7" fill="#569cd6"/><rect x="15" y="6.2" width="1" height="1.7" fill="#d4d4d4"/><rect x="16" y="6.2" width="1" height="1.7" fill="#d4d4d4"/><rect x="18" y="6.2" width="1" height="1.7" fill="#d4d4d4"/><rect x="8" y="8.2" width="4" height="1.7" fill="#569cd6"/><rect x="12" y="8.2" width="1" height="1.7" fill="#d4d4d4"/><rect x="13" y="8.2" width="14" height="1.7" fill="#9cdcfe"/><rect x="28" y="8.2" width="1" height="1.7" fill="#d4d4d4"/><rect x="30" y="8.2" width="4" height="1.7" fill="#569cd6"/><rect x="34" y="8.2" width="1" height="1.7" fill="#d4d4d4"/><rect x="8" y="10.2" width="4" height="1.7" fill="#569cd6"/><rect x="12" y="10.2" width="1" height="1.7" fill="#d4d4d4"/><rect x="13" y="10.2" width="7" height="1.7" fill="#9cdcfe"/><rect x="21" y="10.2" width="1" height="1.7" fill="#d4d4d4"/><rect x="23" y="10.2" width="1" height="1.7" fill="#d4d4d4"/><rect x="24" y="10.2" width="1" height="1.7" fill="#d4d4d4"/><rect x="25" y="10.2" width="1" height="1.7" fill="#d4d4d4"/><rect x="8" y="12.2" width="4" height="1.7" fill="#569cd6"/><rect x="12" y="12.2" width="1" height="1.7" fill="#d4d4d4"/><rect x="13" y="12.2" width="16" height="1.7" fill="#9cdcfe"/><rect x="30" y="12.2" width="1" height="1.7" fill="#d4d4d4"/><rect x="32" y="12.2" width="4" height="1.7" fill="#569cd6"/><rect x="36" y="12.2" width="1" height="1.7" fill="#d4d4d4"/><rect x="37" y="12.2" width="11" height="1.7" fill="#dcdcaa"/><rect x="48" y="12.2" width="1" height="1.7" fill="#d4d4d4"/><rect x="49" y="12.2" width="3" height="1.7" fill="#569cd6"/><rect x="53" y="12.2" width="4" height="1.7" fill="#4ec9b0"/><rect x="57" y="12.2" width="1" height="1.7" fill="#d4d4d4"/><rect x="58" y="12.2" width="1" height="1.7" fill="#d4d4d4"/><rect x="59" y="12.2" width="1" height="1.7" fill="#d4d4d4"/><rect x="60" y="12.2" width="1" height="1.7" fill="#d4d4d4"/><rect x="8" y="14.2" width="4" height="1.7" fill="#569cd6"/><rect x="12" y="14.2" width="1" height="1.7" fill="#d4d4d4"/><rect x="13" y="14.2" width="4" height="1.7" fill="#dcdcaa"/><rect x="17" y="14.2" width="1" height="1.7" fill="#d4d4d4"/><rect x="18" y="14.2" width="1" height="1.7" fill="#d4d4d4"/><rect x="19" y="14.2" width="1" height="1.7" fill="#d4d4d4"/><rect x="4" y="16.1" width="1" height="1.7" fill="#d4d4d4"/><rect x="4" y="20.1" width="4" height="1.7" fill="#dcdcaa"/><rect x="8" y="20.1" width="1" height="1.7" fill="#d4d4d4"/><rect x="9" y="20.1" width="1" height="1.7" fill="#d4d4d4"/><rect x="11" y="20.1" width="1" height="1.7" fill="#d4d4d4"/><rect x="8" y="22.1" width="4" height="1.7" fill="#569cd6"/><rect x="12" y="22.1" width="1" height="1.7" fill="#d4d4d4"/><rect x="13" y="22.1" width="19" height="1.7" fill="#dcdcaa"/><rect x="32" y="22.1" width="1" height="1.7" fill="#d4d4d4"/><rect x="33" y="22.1" width="1" height="1.7" fill="#d4d4d4"/><rect x="34" y="22.1" width="1" height="1.7" fill="#d4d4d4"/><rect x="8" y="24.1" width="4" height="1.7" fill="#569cd6"/><rect x="12" y="24.1" width="1" height="1.7" fill="#d4d4d4"/><rect x="13" y="24.1" width="11" height="1.7" fill="#dcdcaa"/><rect x="24" y="24.1" width="1" height="1.7" fill="#d4d4d4"/><rect x="25" y="24.1" width="1" height="1.7" fill="#d4d4d4"/><rect x="26" y="24.1" width="1" height="1.7" fill="#d4d4d4"/><rect x="8" y="26.1" width="4" height="1.7" fill="#569cd6"/><rect x="12" y="26.1" width="1" height="1.7" fill="#d4d4d4"/><rect x="13" y="26.1" width="12" height="1.7" fill="#dcdcaa"/><rect x="25" y="26.1" width="1" height="1.7" fill="#d4d4d4"/><rect x="26" y="26.1" width="6" height="1.7" fill="#ce9178"/><rect x="33" y="26.1" width="2" height="1.7" fill="#ce9178"/><rect x="36" y="26.1" width="9" height="1.7" fill="#ce9178"/><rect x="45" y="26.1" width="1" height="1.7" fill="#d4d4d4"/><rect x="46" y="26.1" width="1" height="1.7" fill="#d4d4d4"/><rect x="4" y="28.1" width="1" height="1.7" fill="#d4d4d4"/><rect x="4" y="32.1" width="19" height="1.7" fill="#dcdcaa"/><rect x="23" y="32.1" width="1" height="1.7" fill="#d4d4d4"/><rect x="24" y="32.1" width="1" height="1.7" fill="#d4d4d4"/><rect x="26" y="32.1" width="1" height="1.7" fill="#d4d4d4"/><rect x="8" y="34.1" width="2" height="1.7" fill="#6a9955"/><rect x="11" y="34.1" width="5" height="1.7" fill="#6a9955"/><rect x="17" y="34.1" width="4" height="1.7" fill="#6a9955"/><rect x="22" y="34.1" width="6" height="1.7" fill="#6a9955"/><rect x="8" y="36.1" width="8" height="1.7" fill="#9cdcfe"/><rect x="16" y="36.1" width="1" height="1.7" fill="#d4d4d4"/><rect x="17" y="36.1" width="14" height="1.7" fill="#dcdcaa"/><rect x="31" y="36.1" width="1" height="1.7" fill="#d4d4d4"/><rect x="32" y="36.1" width="11" height="1.7" fill="#ce9178"/><rect x="43" y="36.1" width="1" height="1.7" fill="#d4d4d4"/><rect x="44" y="36.1" width="1" height="1.7" fill="#d4d4d4"/><rect x="45" y="36.1" width="16" height="1.7" fill="#dcdcaa"/><rect x="61" y="36.1" width="1" height="1.7" fill="#d4d4d4"/><rect x="62" y="36.1" width="7" height="1.7" fill="#ce9178"/><rect x="69" y="36.1" width="1" height="1.7" fill="#d4d4d4"/><rect x="71" y="36.1" width="1" height="1.7" fill="#d4d4d4"/><rect x="72" y="36.1" width="1" height="1.7" fill="#d4d4d4"/><rect x="74" y="36.1" width="2" height="1.7" fill="#569cd6"/><rect x="77" y="36.1" width="4" height="1.7" fill="#569cd6"/><rect x="81" y="36.1" width="1" height="1.7" fill="#d4d4d4"/><rect x="82" y="36.1" width="9" height="1.7" fill="#dcdcaa"/><rect x="91" y="36.1" width="1" height="1.7" fill="#d4d4d4"/><rect x="92" y="36.1" width="1" height="1.7" fill="#d4d4d4"/><rect x="93" y="36.1" width="1" height="1.7" fill="#d4d4d4"/><rect x="94" y="36.1" width="1" height="1.7" fill="#d4d4d4"/><rect x="8" y="38.1" width="8" height="1.7" fill="#9cdcfe"/><rect x="16" y="38.1" width="1" height="1.7" fill="#d4d4d4"/><rect x="17" y="38.1" width="14" height="1.7" fill="#dcdcaa"/><rect x="31" y="38.1" width="1" height="1.7" fill="#d4d4d4"/><rect x="32" y="38.1" width="12" height="1.7" fill="#ce9178"/><rect x="44" y="38.1" width="1" height="1.7" fill="#d4d4d4"/><rect x="45" y="38.1" width="1" height="1.7" fill="#d4d4d4"/><rect x="46" y="38.1" width="16" height="1.7" fill="#dcdcaa"/><rect x="62" y="38.1" width="1" height="1.7" fill="#d4d4d4"/><rect x="63" y="38.1" width="7" height="1.7" fill="#ce9178"/><rect x="70" y="38.1" width="1" height="1.7" fill="#d4d4d4"/><rect x="72" y="38.1" width="1" height="1.7" fill="#d4d4d4"/><rect x="73" y="38.1" width="1" height="1.7" fill="#d4d4d4"/><rect x="75" y="38.1" width="2" height="1.7" fill="#569cd6"/><rect x="78" y="38.1" width="4" height="1.7" fill="#569cd6"/><rect x="82" y="38.1" width="1" height="1.7" fill="#d4d4d4"/><rect x="83" y="38.1" width="10" height="1.7" fill="#dcdcaa"/><rect x="93" y="38.1" width="1" height="1.7" fill="#d4d4d4"/><rect x="94" y="38.1" width="1" height="1.7" fill="#d4d4d4"/><rect x="95" y="38.1" width="1" height="1.7" fill="#d4d4d4"/><rect x="96" y="38.1" width="1" height="1.7" fill="#d4d4d4"/><rect x="8" y="42.1" width="2" height="1.7" fill="#6a9955"/><rect x="11" y="42.1" width="4" height="1.7" fill="#6a9955"/><rect x="16" y="42.1" width="4" height="1.7" fill="#6a9955"/><rect x="21" y="42.1" width="6" height="1.7" fill="#6a9955"/><rect x="8" y="44.1" width="8" height="1.7" fill="#9cdcfe"/><rect x="16" y="44.1" width="1" height="1.7" fill="#d4d4d4"/><rect x="17" y="44.1" width="14" height="1.7" fill="#dcdcaa"/><rect x="31" y="44.1" width="1" height="1.7" fill="#d4d4d4"/><rect x="32" y="44.1" width="11" height="1.7" fill="#ce9178"/><rect x="43" y="44.1" width="1" height="1.7" fill="#d4d4d4"/><rect x="44" y="44.1" width="1" height="1.7" fill="#d4d4d4"/><rect x="45" y="44.1" width="16" height="1.7" fill="#dcdcaa"/><rect x="61" y="44.1" width="1" height="1.7" fill="#d4d4d4"/><rect x="62" y="44.1" width="7" height="1.7" fill="#ce9178"/><rect x="69" y="44.1" width="1" height="1.7" fill="#d4d4d4"/><rect x="71" y="44.1" width="1" height="1.7" fill="#d4d4d4"/><rect x="72" y="44.1" width="1" height="1.7" fill="#d4d4d4"/><rect x="74" y="44.1" width="2" height="1.7" fill="#569cd6"/><rect x="77" y="44.1" width="4" height="1.7" fill="#569cd6"/><rect x="81" y="44.1" width="1" height="1.7" fill="#d4d4d4"/><rect x="82" y="44.1" width="13" height="1.7" fill="#dcdcaa"/><rect x="95" y="44.1" width="1" height="1.7" fill="#d4d4d4"/><rect x="96" y="44.1" width="1" height="1.7" fill="#d4d4d4"/><rect x="97" y="44.1" width="1" height="1.7" fill="#d4d4d4"/><rect x="98" y="44.1" width="1" height="1.7" fill="#d4d4d4"/><rect x="8" y="48.1" width="2" height="1.7" fill="#6a9955"/><rect x="11" y="48.1" width="4" height="1.7" fill="#6a9955"/><rect x="16" y="48.1" width="10" height="1.7" fill="#6a9955"/><rect x="8" y="50.1" width="8" height="1.7" fill="#9cdcfe"/><rect x="16" y="50.1" width="1" height="1.7" fill="#d4d4d4"/><rect x="17" y="50.1" width="14" height="1.7" fill="#dcdcaa"/><rect x="31" y="50.1" width="1" height="1.7" fill="#d4d4d4"/><rect x="32" y="50.1" width="10" height="1.7" fill="#ce9178"/><rect x="42" y="50.1" width="1" height="1.7" fill="#d4d4d4"/><rect x="43" y="50.1" width="1" height="1.7" fill="#d4d4d4"/><rect x="44" y="50.1" width="16" height="1.7" fill="#dcdcaa"/><rect x="60" y="50.1" width="1" height="1.7" fill="#d4d4d4"/><rect x="61" y="50.1" width="7" height="1.7" fill="#ce9178"/><rect x="68" y="50.1" width="1" height="1.7" fill="#d4d4d4"/><rect x="70" y="50.1" width="1" height="1.7" fill="#d4d4d4"/><rect x="71" y="50.1" width="1" height="1.7" fill="#d4d4d4"/><rect x="73" y="50.1" width="2" height="1.7" fill="#569cd6"/><rect x="76" y="50.1" width="4" height="1.7" fill="#569cd6"/><rect x="80" y="50.1" width="1" height="1.7" fill="#d4d4d4"/><rect x="81" y="50.1" width="10" height="1.7" fill="#dcdcaa"/><rect x="91" y="50.1" width="1" height="1.7" fill="#d4d4d4"/><rect x="92" y="50.1" width="1" height="1.7" fill="#d4d4d4"/><rect x="93" y="50.1" width="1" height="1.7" fill="#b5cea8"/><rect x="94" y="50.1" width="1" height="1.7" fill="#d4d4d4"/><rect x="95" y="50.1" width="1" height="1.7" fill="#d4d4d4"/><rect x="96" y="50.1" width="1" height="1.7" fill="#d4d4d4"/><rect x="8" y="52.1" width="8" height="1.7" fill="#9cdcfe"/><rect x="16" y="52.1" width="1" height="1.7" fill="#d4d4d4"/><rect x="17" y="52.1" width="14" height="1.7" fill="#dcdcaa"/><rect x="31" y="52.1" width="1" height="1.7" fill="#d4d4d4"/><rect x="32" y="52.1" width="10" height="1.7" fill="#ce9178"/><rect x="42" y="52.1" width="1" height="1.7" fill="#d4d4d4"/><rect x="43" y="52.1" width="1" height="1.7" fill="#d4d4d4"/><rect x="44" y="52.1" width="16" height="1.7" fill="#dcdcaa"/><rect x="60" y="52.1" width="1" height="1.7" fill="#d4d4d4"/><rect x="61" y="52.1" width="7" height="1.7" fill="#ce9178"/><rect x="68" y="52.1" width="1" height="1.7" fill="#d4d4d4"/><rect x="70" y="52.1" width="1" height="1.7" fill="#d4d4d4"/><rect x="71" y="52.1" width="1" height="1.7" fill="#d4d4d4"/><rect x="73" y="52.1" width="2" height="1.7" fill="#569cd6"/><rect x="76" y="52.1" width="4" height="1.7" fill="#569cd6"/><rect x="80" y="52.1" width="1" height="1.7" fill="#d4d4d4"/><rect x="81" y="52.1" width="10" height="1.7" fill="#dcdcaa"/><rect x="91" y="52.1" width="1" height="1.7" fill="#d4d4d4"/><rect x="92" y="52.1" width="1" height="1.7" fill="#b5cea8"/><rect x="93" y="52.1" width="1" height="1.7" fill="#d4d4d4"/><rect x="94" y="52.1" width="1" height="1.7" fill="#d4d4d4"/><rect x="95" y="52.1" width="1" height="1.7" fill="#d4d4d4"/><rect x="8" y="56.1" width="2" height="1.7" fill="#6a9955"/><rect x="11" y="56.1" width="8" height="1.7" fill="#6a9955"/><rect x="20" y="56.1" width="9" height="1.7" fill="#6a9955"/><rect x="8" y="58.1" width="8" height="1.7" fill="#9cdcfe"/><rect x="16" y="58.1" width="1" height="1.7" fill="#d4d4d4"/><rect x="17" y="58.1" width="16" height="1.7" fill="#dcdcaa"/><rect x="33" y="58.1" width="1" height="1.7" fill="#d4d4d4"/><rect x="34" y="58.1" width="9" height="1.7" fill="#ce9178"/><rect x="43" y="58.1" width="1" height="1.7" fill="#d4d4d4"/><rect x="45" y="58.1" width="1" height="1.7" fill="#d4d4d4"/><rect x="46" y="58.1" width="1" height="1.7" fill="#9cdcfe"/><rect x="47" y="58.1" width="1" height="1.7" fill="#d4d4d4"/><rect x="49" y="58.1" width="2" height="1.7" fill="#569cd6"/><rect x="52" y="58.1" width="1" height="1.7" fill="#d4d4d4"/><rect x="12" y="60.1" width="2" height="1.7" fill="#c586c0"/><rect x="15" y="60.1" width="1" height="1.7" fill="#d4d4d4"/><rect x="16" y="60.1" width="1" height="1.7" fill="#9cdcfe"/><rect x="17" y="60.1" width="1" height="1.7" fill="#d4d4d4"/><rect x="18" y="60.1" width="7" height="1.7" fill="#9cdcfe"/><rect x="26" y="60.1" width="2" height="1.7" fill="#d4d4d4"/><rect x="29" y="60.1" width="1" height="1.7" fill="#9cdcfe"/><rect x="30" y="60.1" width="1" height="1.7" fill="#d4d4d4"/><rect x="31" y="60.1" width="3" height="1.7" fill="#9cdcfe"/><rect x="35" y="60.1" width="3" height="1.7" fill="#d4d4d4"/><rect x="39" y="60.1" width="3" height="1.7" fill="#ce9178"/><rect x="42" y="60.1" width="1" height="1.7" fill="#d4d4d4"/><rect x="44" y="60.1" width="1" height="1.7" fill="#d4d4d4"/><rect x="16" y="62.1" width="1" height="1.7" fill="#9cdcfe"/><rect x="17" y="62.1" width="1" height="1.7" fill="#d4d4d4"/><rect x="18" y="62.1" width="14" height="1.7" fill="#dcdcaa"/><rect x="32" y="62.1" width="1" height="1.7" fill="#d4d4d4"/><rect x="33" y="62.1" width="1" height="1.7" fill="#d4d4d4"/><rect x="34" y="62.1" width="1" height="1.7" fill="#d4d4d4"/><rect x="16" y="64.2" width="4" height="1.7" fill="#569cd6"/><rect x="20" y="64.2" width="1" height="1.7" fill="#d4d4d4"/><rect x="21" y="64.2" width="9" height="1.7" fill="#dcdcaa"/><rect x="30" y="64.2" width="1" height="1.7" fill="#d4d4d4"/><rect x="31" y="64.2" width="1" height="1.7" fill="#d4d4d4"/><rect x="32" y="64.2" width="1" height="1.7" fill="#d4d4d4"/><rect x="12" y="66.2" width="1" height="1.7" fill="#d4d4d4"/><rect x="8" y="68.2" width="1" height="1.7" fill="#d4d4d4"/><rect x="9" y="68.2" width="1" height="1.7" fill="#d4d4d4"/><rect x="10" y="68.2" width="1" height="1.7" fill="#d4d4d4"/><rect x="4" y="70.2" width="1" height="1.7" fill="#d4d4d4"/><rect x="4" y="74.2" width="5" height="1.7" fill="#569cd6"/><rect x="10" y="74.2" width="9" height="1.7" fill="#dcdcaa"/><rect x="19" y="74.2" width="1" height="1.7" fill="#d4d4d4"/><rect x="20" y="74.2" width="1" height="1.7" fill="#d4d4d4"/><rect x="22" y="74.2" width="1" height="1.7" fill="#d4d4d4"/><rect x="8" y="76.2" width="5" height="1.7" fill="#569cd6"/><rect x="14" y="76.2" width="7" height="1.7" fill="#4fc1ff"/><rect x="22" y="76.2" width="1" height="1.7" fill="#d4d4d4"/><rect x="24" y="76.2" width="8" height="1.7" fill="#9cdcfe"/><rect x="32" y="76.2" width="1" height="1.7" fill="#d4d4d4"/><rect x="33" y="76.2" width="14" height="1.7" fill="#dcdcaa"/><rect x="47" y="76.2" width="1" height="1.7" fill="#d4d4d4"/><rect x="48" y="76.2" width="11" height="1.7" fill="#ce9178"/><rect x="59" y="76.2" width="1" height="1.7" fill="#d4d4d4"/><rect x="60" y="76.2" width="1" height="1.7" fill="#d4d4d4"/><rect x="61" y="76.2" width="5" height="1.7" fill="#9cdcfe"/><rect x="66" y="76.2" width="1" height="1.7" fill="#d4d4d4"/><rect x="67" y="76.2" width="4" height="1.7" fill="#dcdcaa"/><rect x="71" y="76.2" width="1" height="1.7" fill="#d4d4d4"/><rect x="72" y="76.2" width="1" height="1.7" fill="#d4d4d4"/><rect x="73" y="76.2" width="1" height="1.7" fill="#d4d4d4"/><rect x="8" y="80.2" width="2" height="1.7" fill="#c586c0"/><rect x="11" y="80.2" width="1" height="1.7" fill="#d4d4d4"/><rect x="12" y="80.2" width="1" height="1.7" fill="#d4d4d4"/><rect x="13" y="80.2" width="7" height="1.7" fill="#4fc1ff"/><rect x="20" y="80.2" width="1" height="1.7" fill="#d4d4d4"/><rect x="22" y="80.2" width="1" height="1.7" fill="#d4d4d4"/><rect x="12" y="82.2" width="4" height="1.7" fill="#569cd6"/><rect x="16" y="82.2" width="1" height="1.7" fill="#d4d4d4"/><rect x="17" y="82.2" width="16" height="1.7" fill="#dcdcaa"/><rect x="33" y="82.2" width="1" height="1.7" fill="#d4d4d4"/><rect x="34" y="82.2" width="7" height="1.7" fill="#ce9178"/><rect x="42" y="82.2" width="5" height="1.7" fill="#ce9178"/><rect x="48" y="82.2" width="9" height="1.7" fill="#ce9178"/><rect x="58" y="82.2" width="6" height="1.7" fill="#ce9178"/><rect x="65" y="82.2" width="7" height="1.7" fill="#ce9178"/><rect x="72" y="82.2" width="1" height="1.7" fill="#d4d4d4"/><rect x="74" y="82.2" width="9" height="1.7" fill="#ce9178"/><rect x="83" y="82.2" width="1" height="1.7" fill="#d4d4d4"/><rect x="84" y="82.2" width="1" height="1.7" fill="#d4d4d4"/><rect x="12" y="84.2" width="6" height="1.7" fill="#c586c0"/><rect x="18" y="84.2" width="1" height="1.7" fill="#d4d4d4"/><rect x="8" y="86.2" width="1" height="1.7" fill="#d4d4d4"/><rect x="8" y="90.2" width="3" height="1.7" fill="#c586c0"/><rect x="12" y="90.2" width="1" height="1.7" fill="#d4d4d4"/><rect x="12" y="92.2" width="4" height="1.7" fill="#569cd6"/><rect x="16" y="92.2" width="1" height="1.7" fill="#d4d4d4"/><rect x="17" y="92.2" width="12" height="1.7" fill="#dcdcaa"/><rect x="29" y="92.2" width="1" height="1.7" fill="#d4d4d4"/><rect x="30" y="92.2" width="11" height="1.7" fill="#ce9178"/><rect x="41" y="92.2" width="1" height="1.7" fill="#d4d4d4"/><rect x="42" y="92.2" width="1" height="1.7" fill="#d4d4d4"/><rect x="12" y="94.2" width="5" height="1.7" fill="#569cd6"/><rect x="18" y="94.2" width="9" height="1.7" fill="#4fc1ff"/><rect x="28" y="94.2" width="1" height="1.7" fill="#d4d4d4"/><rect x="30" y="94.2" width="1" height="1.7" fill="#d4d4d4"/><rect x="16" y="96.2" width="7" height="1.7" fill="#4fc1ff"/><rect x="23" y="96.2" width="1" height="1.7" fill="#d4d4d4"/><rect x="25" y="96.2" width="7" height="1.7" fill="#4fc1ff"/><rect x="32" y="96.2" width="1" height="1.7" fill="#d4d4d4"/><rect x="16" y="98.2" width="7" height="1.7" fill="#9cdcfe"/><rect x="23" y="98.2" width="1" height="1.7" fill="#d4d4d4"/><rect x="25" y="98.2" width="4" height="1.7" fill="#569cd6"/><rect x="29" y="98.2" width="1" height="1.7" fill="#d4d4d4"/><rect x="30" y="98.2" width="14" height="1.7" fill="#9cdcfe"/><rect x="12" y="100.2" width="1" height="1.7" fill="#d4d4d4"/><rect x="13" y="100.2" width="1" height="1.7" fill="#d4d4d4"/><rect x="12" y="104.2" width="5" height="1.7" fill="#c586c0"/><rect x="18" y="104.2" width="11" height="1.7" fill="#4fc1ff"/><rect x="29" y="104.2" width="1" height="1.7" fill="#d4d4d4"/><rect x="30" y="104.2" width="6" height="1.7" fill="#dcdcaa"/><rect x="36" y="104.2" width="1" height="1.7" fill="#d4d4d4"/><rect x="37" y="104.2" width="12" height="1.7" fill="#ce9178"/><rect x="49" y="104.2" width="1" height="1.7" fill="#d4d4d4"/><rect x="51" y="104.2" width="9" height="1.7" fill="#4fc1ff"/><rect x="60" y="104.2" width="1" height="1.7" fill="#d4d4d4"/><rect x="61" y="104.2" width="1" height="1.7" fill="#d4d4d4"/><rect x="12" y="106.2" width="4" height="1.7" fill="#569cd6"/><rect x="16" y="106.2" width="1" height="1.7" fill="#d4d4d4"/><rect x="17" y="106.2" width="16" height="1.7" fill="#dcdcaa"/><rect x="33" y="106.2" width="1" height="1.7" fill="#d4d4d4"/><rect x="34" y="106.2" width="6" height="1.7" fill="#ce9178"/><rect x="41" y="106.2" width="5" height="1.7" fill="#ce9178"/><rect x="47" y="106.2" width="14" height="1.7" fill="#ce9178"/><rect x="61" y="106.2" width="1" height="1.7" fill="#d4d4d4"/><rect x="63" y="106.2" width="9" height="1.7" fill="#ce9178"/><rect x="72" y="106.2" width="1" height="1.7" fill="#d4d4d4"/><rect x="73" y="106.2" width="1" height="1.7" fill="#d4d4d4"/><rect x="12" y="108.2" width="4" height="1.7" fill="#569cd6"/><rect x="16" y="108.2" width="1" height="1.7" fill="#d4d4d4"/><rect x="17" y="108.2" width="12" height="1.7" fill="#dcdcaa"/><rect x="29" y="108.2" width="1" height="1.7" fill="#d4d4d4"/><rect x="30" y="108.2" width="6" height="1.7" fill="#ce9178"/><rect x="37" y="108.2" width="6" height="1.7" fill="#ce9178"/><rect x="43" y="108.2" width="1" height="1.7" fill="#d4d4d4"/><rect x="44" y="108.2" width="1" height="1.7" fill="#d4d4d4"/><rect x="12" y="112.2" width="2" height="1.7" fill="#6a9955"/><rect x="15" y="112.2" width="6" height="1.7" fill="#6a9955"/><rect x="22" y="112.2" width="7" height="1.7" fill="#6a9955"/><rect x="30" y="112.2" width="3" height="1.7" fill="#6a9955"/><rect x="34" y="112.2" width="5" height="1.7" fill="#6a9955"/><rect x="40" y="112.2" width="4" height="1.7" fill="#6a9955"/><rect x="12" y="114.2" width="5" height="1.7" fill="#c586c0"/><rect x="18" y="114.2" width="4" height="1.7" fill="#569cd6"/><rect x="22" y="114.2" width="1" height="1.7" fill="#d4d4d4"/><rect x="23" y="114.2" width="11" height="1.7" fill="#dcdcaa"/><rect x="34" y="114.2" width="1" height="1.7" fill="#d4d4d4"/><rect x="35" y="114.2" width="1" height="1.7" fill="#d4d4d4"/><rect x="36" y="114.2" width="1" height="1.7" fill="#d4d4d4"/><rect x="12" y="116.2" width="4" height="1.7" fill="#569cd6"/><rect x="16" y="116.2" width="1" height="1.7" fill="#d4d4d4"/><rect x="17" y="116.2" width="10" height="1.7" fill="#dcdcaa"/><rect x="27" y="116.2" width="1" height="1.7" fill="#d4d4d4"/><rect x="28" y="116.2" width="1" height="1.7" fill="#d4d4d4"/><rect x="29" y="116.2" width="1" height="1.7" fill="#d4d4d4"/><rect x="8" y="120.2" width="1" height="1.7" fill="#d4d4d4"/><rect x="10" y="120.2" width="5" height="1.7" fill="#c586c0"/><rect x="16" y="120.2" width="1" height="1.7" fill="#d4d4d4"/><rect x="17" y="120.2" width="5" height="1.7" fill="#9cdcfe"/><rect x="22" y="120.2" width="1" height="1.7" fill="#d4d4d4"/><rect x="24" y="120.2" width="1" height="1.7" fill="#d4d4d4"/><rect x="12" y="122.2" width="7" height="1.7" fill="#9cdcfe"/><rect x="19" y="122.2" width="1" height="1.7" fill="#d4d4d4"/><rect x="20" y="122.2" width="5" height="1.7" fill="#dcdcaa"/><rect x="25" y="122.2" width="1" height="1.7" fill="#d4d4d4"/><rect x="26" y="122.2" width="6" height="1.7" fill="#ce9178"/><rect x="33" y="122.2" width="6" height="1.7" fill="#ce9178"/><rect x="40" y="122.2" width="7" height="1.7" fill="#ce9178"/><rect x="47" y="122.2" width="1" height="1.7" fill="#d4d4d4"/><rect x="49" y="122.2" width="5" height="1.7" fill="#9cdcfe"/><rect x="54" y="122.2" width="1" height="1.7" fill="#d4d4d4"/><rect x="55" y="122.2" width="1" height="1.7" fill="#d4d4d4"/><rect x="12" y="124.2" width="4" height="1.7" fill="#569cd6"/><rect x="16" y="124.2" width="1" height="1.7" fill="#d4d4d4"/><rect x="17" y="124.2" width="16" height="1.7" fill="#dcdcaa"/><rect x="33" y="124.2" width="1" height="1.7" fill="#d4d4d4"/><rect x="34" y="124.2" width="7" height="1.7" fill="#ce9178"/><rect x="42" y="124.2" width="2" height="1.7" fill="#ce9178"/><rect x="45" y="124.2" width="4" height="1.7" fill="#ce9178"/><rect x="50" y="124.2" width="6" height="1.7" fill="#ce9178"/><rect x="57" y="124.2" width="6" height="1.7" fill="#ce9178"/><rect x="64" y="124.2" width="3" height="1.7" fill="#ce9178"/><rect x="68" y="124.2" width="7" height="1.7" fill="#ce9178"/><rect x="75" y="124.2" width="1" height="1.7" fill="#d4d4d4"/><rect x="77" y="124.2" width="7" height="1.7" fill="#ce9178"/><rect x="84" y="124.2" width="1" height="1.7" fill="#d4d4d4"/><rect x="85" y="124.2" width="1" height="1.7" fill="#d4d4d4"/><rect x="12" y="126.2" width="4" height="1.7" fill="#569cd6"/><rect x="16" y="126.2" width="1" height="1.7" fill="#d4d4d4"/><rect x="17" y="126.2" width="12" height="1.7" fill="#dcdcaa"/><rect x="29" y="126.2" width="1" height="1.7" fill="#d4d4d4"/><rect x="30" y="126.2" width="6" height="1.7" fill="#ce9178"/><rect x="37" y="126.2" width="6" height="1.7" fill="#ce9178"/><rect x="44" y="126.2" width="6" height="1.7" fill="#ce9178"/><rect x="50" y="126.2" width="1" height="1.7" fill="#d4d4d4"/><rect x="51" y="126.2" width="1" height="1.7" fill="#d4d4d4"/><rect x="8" y="128.2" width="1" height="1.7" fill="#d4d4d4"/><rect x="4" y="130.2" width="1" height="1.7" fill="#d4d4d4"/><rect x="4" y="134.2" width="10" height="1.7" fill="#dcdcaa"/><rect x="14" y="134.2" width="1" height="1.7" fill="#d4d4d4"/><rect x="15" y="134.2" width="1" height="1.7" fill="#d4d4d4"/><rect x="17" y="134.2" width="1" height="1.7" fill="#d4d4d4"/><rect x="8" y="136.2" width="8" height="1.7" fill="#9cdcfe"/><rect x="16" y="136.2" width="1" height="1.7" fill="#d4d4d4"/><rect x="17" y="136.2" width="14" height="1.7" fill="#dcdcaa"/><rect x="31" y="136.2" width="1" height="1.7" fill="#d4d4d4"/><rect x="32" y="136.2" width="11" height="1.7" fill="#ce9178"/><rect x="43" y="136.2" width="1" height="1.7" fill="#d4d4d4"/><rect x="44" y="136.2" width="1" height="1.7" fill="#d4d4d4"/><rect x="45" y="136.2" width="5" height="1.7" fill="#9cdcfe"/><rect x="51" y="136.2" width="1" height="1.7" fill="#d4d4d4"/><rect x="53" y="136.2" width="2" height="1.7" fill="#ce9178"/><rect x="55" y="136.2" width="1" height="1.7" fill="#d4d4d4"/><rect x="8" y="138.2" width="4" height="1.7" fill="#569cd6"/><rect x="12" y="138.2" width="1" height="1.7" fill="#d4d4d4"/><rect x="13" y="138.2" width="14" height="1.7" fill="#9cdcfe"/><rect x="28" y="138.2" width="1" height="1.7" fill="#d4d4d4"/><rect x="30" y="138.2" width="4" height="1.7" fill="#569cd6"/><rect x="34" y="138.2" width="1" height="1.7" fill="#d4d4d4"/><rect x="8" y="140.2" width="4" height="1.7" fill="#569cd6"/><rect x="12" y="140.2" width="1" height="1.7" fill="#d4d4d4"/><rect x="13" y="140.2" width="12" height="1.7" fill="#dcdcaa"/><rect x="25" y="140.2" width="1" height="1.7" fill="#d4d4d4"/><rect x="26" y="140.2" width="6" height="1.7" fill="#ce9178"/><rect x="33" y="140.2" width="2" height="1.7" fill="#ce9178"/><rect x="36" y="140.2" width="9" height="1.7" fill="#ce9178"/><rect x="45" y="140.2" width="1" height="1.7" fill="#d4d4d4"/><rect x="46" y="140.2" width="1" height="1.7" fill="#d4d4d4"/><rect x="4" y="142.2" width="1" height="1.7" fill="#d4d4d4"/><rect x="4" y="146.2" width="13" height="1.7" fill="#dcdcaa"/><rect x="17" y="146.2" width="1" height="1.7" fill="#d4d4d4"/><rect x="18" y="146.2" width="1" height="1.7" fill="#d4d4d4"/><rect x="20" y="146.2" width="1" height="1.7" fill="#d4d4d4"/><rect x="8" y="148.2" width="5" height="1.7" fill="#569cd6"/><rect x="14" y="148.2" width="7" height="1.7" fill="#4fc1ff"/><rect x="22" y="148.2" width="1" height="1.7" fill="#d4d4d4"/><rect x="24" y="148.2" width="8" height="1.7" fill="#9cdcfe"/><rect x="32" y="148.2" width="1" height="1.7" fill="#d4d4d4"/><rect x="33" y="148.2" width="14" height="1.7" fill="#dcdcaa"/><rect x="47" y="148.2" width="1" height="1.7" fill="#d4d4d4"/><rect x="48" y="148.2" width="11" height="1.7" fill="#ce9178"/><rect x="59" y="148.2" width="1" height="1.7" fill="#d4d4d4"/><rect x="60" y="148.2" width="1" height="1.7" fill="#d4d4d4"/><rect x="61" y="148.2" width="5" height="1.7" fill="#9cdcfe"/><rect x="66" y="148.2" width="1" height="1.7" fill="#d4d4d4"/><rect x="8" y="150.2" width="2" height="1.7" fill="#c586c0"/><rect x="11" y="150.2" width="1" height="1.7" fill="#d4d4d4"/><rect x="12" y="150.2" width="7" height="1.7" fill="#4fc1ff"/><rect x="19" y="150.2" width="1" height="1.7" fill="#d4d4d4"/><rect x="21" y="150.2" width="1" height="1.7" fill="#d4d4d4"/><rect x="12" y="152.2" width="4" height="1.7" fill="#569cd6"/><rect x="16" y="152.2" width="1" height="1.7" fill="#d4d4d4"/><rect x="17" y="152.2" width="12" height="1.7" fill="#dcdcaa"/><rect x="29" y="152.2" width="1" height="1.7" fill="#d4d4d4"/><rect x="30" y="152.2" width="1" height="1.7" fill="#ce9178"/><rect x="31" y="152.2" width="2" height="1.7" fill="#569cd6"/><rect x="33" y="152.2" width="7" height="1.7" fill="#4fc1ff"/><rect x="40" y="152.2" width="1" height="1.7" fill="#d4d4d4"/><rect x="41" y="152.2" width="6" height="1.7" fill="#9cdcfe"/><rect x="47" y="152.2" width="1" height="1.7" fill="#569cd6"/><rect x="49" y="152.2" width="10" height="1.7" fill="#ce9178"/><rect x="60" y="152.2" width="7" height="1.7" fill="#ce9178"/><rect x="67" y="152.2" width="1" height="1.7" fill="#ce9178"/><rect x="68" y="152.2" width="1" height="1.7" fill="#d4d4d4"/><rect x="69" y="152.2" width="1" height="1.7" fill="#d4d4d4"/><rect x="8" y="154.2" width="1" height="1.7" fill="#d4d4d4"/><rect x="10" y="154.2" width="4" height="1.7" fill="#c586c0"/><rect x="15" y="154.2" width="1" height="1.7" fill="#d4d4d4"/><rect x="12" y="156.2" width="4" height="1.7" fill="#569cd6"/><rect x="16" y="156.2" width="1" height="1.7" fill="#d4d4d4"/><rect x="17" y="156.2" width="12" height="1.7" fill="#dcdcaa"/><rect x="29" y="156.2" width="1" height="1.7" fill="#d4d4d4"/><rect x="30" y="156.2" width="6" height="1.7" fill="#ce9178"/><rect x="37" y="156.2" width="2" height="1.7" fill="#ce9178"/><rect x="40" y="156.2" width="9" height="1.7" fill="#ce9178"/><rect x="49" y="156.2" width="1" height="1.7" fill="#d4d4d4"/><rect x="50" y="156.2" width="1" height="1.7" fill="#d4d4d4"/><rect x="8" y="158.2" width="1" height="1.7" fill="#d4d4d4"/><rect x="4" y="160.2" width="1" height="1.7" fill="#d4d4d4"/><rect x="4" y="164.2" width="5" height="1.7" fill="#569cd6"/><rect x="10" y="164.2" width="11" height="1.7" fill="#dcdcaa"/><rect x="21" y="164.2" width="1" height="1.7" fill="#d4d4d4"/><rect x="22" y="164.2" width="1" height="1.7" fill="#d4d4d4"/><rect x="24" y="164.2" width="1" height="1.7" fill="#d4d4d4"/><rect x="8" y="166.2" width="3" height="1.7" fill="#c586c0"/><rect x="12" y="166.2" width="1" height="1.7" fill="#d4d4d4"/><rect x="12" y="168.2" width="4" height="1.7" fill="#569cd6"/><rect x="16" y="168.2" width="1" height="1.7" fill="#d4d4d4"/><rect x="17" y="168.2" width="7" height="1.7" fill="#9cdcfe"/><rect x="25" y="168.2" width="1" height="1.7" fill="#d4d4d4"/><rect x="27" y="168.2" width="5" height="1.7" fill="#c586c0"/><rect x="33" y="168.2" width="11" height="1.7" fill="#4fc1ff"/><rect x="44" y="168.2" width="1" height="1.7" fill="#d4d4d4"/><rect x="45" y="168.2" width="6" height="1.7" fill="#dcdcaa"/><rect x="51" y="168.2" width="1" height="1.7" fill="#d4d4d4"/><rect x="52" y="168.2" width="13" height="1.7" fill="#ce9178"/><rect x="65" y="168.2" width="1" height="1.7" fill="#d4d4d4"/><rect x="66" y="168.2" width="1" height="1.7" fill="#d4d4d4"/><rect x="12" y="170.2" width="4" height="1.7" fill="#569cd6"/><rect x="16" y="170.2" width="1" height="1.7" fill="#d4d4d4"/><rect x="17" y="170.2" width="13" height="1.7" fill="#dcdcaa"/><rect x="30" y="170.2" width="1" height="1.7" fill="#d4d4d4"/><rect x="31" y="170.2" width="1" height="1.7" fill="#d4d4d4"/><rect x="32" y="170.2" width="1" height="1.7" fill="#d4d4d4"/><rect x="12" y="172.2" width="4" height="1.7" fill="#569cd6"/><rect x="16" y="172.2" width="1" height="1.7" fill="#d4d4d4"/><rect x="17" y="172.2" width="25" height="1.7" fill="#dcdcaa"/><rect x="42" y="172.2" width="1" height="1.7" fill="#d4d4d4"/><rect x="43" y="172.2" width="1" height="1.7" fill="#d4d4d4"/><rect x="44" y="172.2" width="1" height="1.7" fill="#d4d4d4"/><rect x="8" y="174.2" width="1" height="1.7" fill="#d4d4d4"/><rect x="10" y="174.2" width="5" height="1.7" fill="#c586c0"/><rect x="16" y="174.2" width="1" height="1.7" fill="#d4d4d4"/><rect x="17" y="174.2" width="5" height="1.7" fill="#9cdcfe"/><rect x="22" y="174.2" width="1" height="1.7" fill="#d4d4d4"/><rect x="24" y="174.2" width="1" height="1.7" fill="#d4d4d4"/><rect x="12" y="176.2" width="7" height="1.7" fill="#9cdcfe"/><rect x="19" y="176.2" width="1" height="1.7" fill="#d4d4d4"/><rect x="20" y="176.2" width="5" height="1.7" fill="#dcdcaa"/><rect x="25" y="176.2" width="1" height="1.7" fill="#d4d4d4"/><rect x="26" y="176.2" width="6" height="1.7" fill="#ce9178"/><rect x="33" y="176.2" width="7" height="1.7" fill="#ce9178"/><rect x="41" y="176.2" width="9" height="1.7" fill="#ce9178"/><rect x="50" y="176.2" width="1" height="1.7" fill="#d4d4d4"/><rect x="52" y="176.2" width="5" height="1.7" fill="#9cdcfe"/><rect x="57" y="176.2" width="1" height="1.7" fill="#d4d4d4"/><rect x="58" y="176.2" width="1" height="1.7" fill="#d4d4d4"/><rect x="12" y="178.2" width="4" height="1.7" fill="#569cd6"/><rect x="16" y="178.2" width="1" height="1.7" fill="#d4d4d4"/><rect x="17" y="178.2" width="16" height="1.7" fill="#dcdcaa"/><rect x="33" y="178.2" width="1" height="1.7" fill="#d4d4d4"/><rect x="34" y="178.2" width="7" height="1.7" fill="#ce9178"/><rect x="42" y="178.2" width="2" height="1.7" fill="#ce9178"/><rect x="45" y="178.2" width="4" height="1.7" fill="#ce9178"/><rect x="50" y="178.2" width="8" height="1.7" fill="#ce9178"/><rect x="58" y="178.2" width="1" height="1.7" fill="#d4d4d4"/><rect x="60" y="178.2" width="7" height="1.7" fill="#ce9178"/><rect x="67" y="178.2" width="1" height="1.7" fill="#d4d4d4"/><rect x="68" y="178.2" width="1" height="1.7" fill="#d4d4d4"/><rect x="8" y="180.2" width="1" height="1.7" fill="#d4d4d4"/><rect x="4" y="182.2" width="1" height="1.7" fill="#d4d4d4"/><rect x="4" y="186.2" width="25" height="1.7" fill="#dcdcaa"/><rect x="29" y="186.2" width="1" height="1.7" fill="#d4d4d4"/><rect x="30" y="186.2" width="1" height="1.7" fill="#d4d4d4"/><rect x="32" y="186.2" width="1" height="1.7" fill="#d4d4d4"/><rect x="8" y="188.2" width="5" height="1.7" fill="#569cd6"/><rect x="14" y="188.2" width="11" height="1.7" fill="#4fc1ff"/><rect x="26" y="188.2" width="1" height="1.7" fill="#d4d4d4"/><rect x="28" y="188.2" width="4" height="1.7" fill="#569cd6"/><rect x="32" y="188.2" width="1" height="1.7" fill="#d4d4d4"/><rect x="33" y="188.2" width="17" height="1.7" fill="#dcdcaa"/><rect x="50" y="188.2" width="1" height="1.7" fill="#d4d4d4"/><rect x="51" y="188.2" width="4" height="1.7" fill="#569cd6"/><rect x="55" y="188.2" width="1" height="1.7" fill="#d4d4d4"/><rect x="56" y="188.2" width="16" height="1.7" fill="#9cdcfe"/><rect x="72" y="188.2" width="1" height="1.7" fill="#d4d4d4"/><rect x="73" y="188.2" width="1" height="1.7" fill="#d4d4d4"/><rect x="8" y="190.2" width="4" height="1.7" fill="#569cd6"/><rect x="12" y="190.2" width="1" height="1.7" fill="#d4d4d4"/><rect x="13" y="190.2" width="14" height="1.7" fill="#dcdcaa"/><rect x="27" y="190.2" width="1" height="1.7" fill="#d4d4d4"/><rect x="28" y="190.2" width="11" height="1.7" fill="#4fc1ff"/><rect x="39" y="190.2" width="1" height="1.7" fill="#d4d4d4"/><rect x="40" y="190.2" width="1" height="1.7" fill="#d4d4d4"/><rect x="8" y="192.2" width="4" height="1.7" fill="#569cd6"/><rect x="12" y="192.2" width="1" height="1.7" fill="#d4d4d4"/><rect x="13" y="192.2" width="17" height="1.7" fill="#dcdcaa"/><rect x="30" y="192.2" width="1" height="1.7" fill="#d4d4d4"/><rect x="31" y="192.2" width="1" height="1.7" fill="#d4d4d4"/><rect x="32" y="192.2" width="1" height="1.7" fill="#d4d4d4"/><rect x="4" y="194.2" width="1" height="1.7" fill="#d4d4d4"/><rect x="4" y="198.2" width="17" height="1.7" fill="#dcdcaa"/><rect x="21" y="198.2" width="1" height="1.7" fill="#d4d4d4"/><rect x="22" y="198.2" width="9" height="1.7" fill="#9cdcfe"/><rect x="31" y="198.2" width="1" height="1.7" fill="#d4d4d4"/><rect x="33" y="198.2" width="1" height="1.7" fill="#d4d4d4"/><rect x="8" y="200.2" width="5" height="1.7" fill="#569cd6"/><rect x="14" y="200.2" width="7" height="1.7" fill="#4fc1ff"/><rect x="22" y="200.2" width="1" height="1.7" fill="#d4d4d4"/><rect x="24" y="200.2" width="3" height="1.7" fill="#569cd6"/><rect x="28" y="200.2" width="4" height="1.7" fill="#4ec9b0"/><rect x="32" y="200.2" width="1" height="1.7" fill="#d4d4d4"/><rect x="33" y="200.2" width="9" height="1.7" fill="#9cdcfe"/><rect x="42" y="200.2" width="1" height="1.7" fill="#d4d4d4"/><rect x="43" y="200.2" width="1" height="1.7" fill="#d4d4d4"/><rect x="8" y="202.2" width="7" height="1.7" fill="#4fc1ff"/><rect x="15" y="202.2" width="1" height="1.7" fill="#d4d4d4"/><rect x="16" y="202.2" width="7" height="1.7" fill="#dcdcaa"/><rect x="23" y="202.2" width="1" height="1.7" fill="#d4d4d4"/><rect x="24" y="202.2" width="7" height="1.7" fill="#4fc1ff"/><rect x="31" y="202.2" width="1" height="1.7" fill="#d4d4d4"/><rect x="32" y="202.2" width="7" height="1.7" fill="#dcdcaa"/><rect x="39" y="202.2" width="1" height="1.7" fill="#d4d4d4"/><rect x="40" y="202.2" width="1" height="1.7" fill="#d4d4d4"/><rect x="42" y="202.2" width="1" height="1.7" fill="#d4d4d4"/><rect x="44" y="202.2" width="1" height="1.7" fill="#b5cea8"/><rect x="45" y="202.2" width="1" height="1.7" fill="#d4d4d4"/><rect x="46" y="202.2" width="1" height="1.7" fill="#d4d4d4"/><rect x="8" y="206.2" width="6" height="1.7" fill="#c586c0"/><rect x="15" y="206.2" width="4" height="1.7" fill="#569cd6"/><rect x="19" y="206.2" width="1" height="1.7" fill="#d4d4d4"/><rect x="20" y="206.2" width="7" height="1.7" fill="#9cdcfe"/><rect x="27" y="206.2" width="1" height="1.7" fill="#d4d4d4"/><rect x="28" y="206.2" width="6" height="1.7" fill="#dcdcaa"/><rect x="34" y="206.2" width="1" height="1.7" fill="#d4d4d4"/><rect x="35" y="206.2" width="5" height="1.7" fill="#4fc1ff"/><rect x="41" y="206.2" width="2" height="1.7" fill="#569cd6"/><rect x="44" y="206.2" width="1" height="1.7" fill="#d4d4d4"/><rect x="12" y="208.2" width="5" height="1.7" fill="#569cd6"/><rect x="18" y="208.2" width="9" height="1.7" fill="#4fc1ff"/><rect x="28" y="208.2" width="1" height="1.7" fill="#d4d4d4"/><rect x="30" y="208.2" width="3" height="1.7" fill="#569cd6"/><rect x="34" y="208.2" width="4" height="1.7" fill="#4ec9b0"/><rect x="38" y="208.2" width="1" height="1.7" fill="#d4d4d4"/><rect x="39" y="208.2" width="5" height="1.7" fill="#4fc1ff"/><rect x="44" y="208.2" width="1" height="1.7" fill="#d4d4d4"/><rect x="45" y="208.2" width="10" height="1.7" fill="#9cdcfe"/><rect x="55" y="208.2" width="1" height="1.7" fill="#d4d4d4"/><rect x="56" y="208.2" width="1" height="1.7" fill="#d4d4d4"/><rect x="12" y="210.2" width="6" height="1.7" fill="#c586c0"/><rect x="19" y="210.2" width="9" height="1.7" fill="#4fc1ff"/><rect x="29" y="210.2" width="2" height="1.7" fill="#d4d4d4"/><rect x="32" y="210.2" width="9" height="1.7" fill="#9cdcfe"/><rect x="42" y="210.2" width="2" height="1.7" fill="#d4d4d4"/><rect x="45" y="210.2" width="9" height="1.7" fill="#4fc1ff"/><rect x="55" y="210.2" width="1" height="1.7" fill="#d4d4d4"/><rect x="57" y="210.2" width="7" height="1.7" fill="#4fc1ff"/><rect x="64" y="210.2" width="1" height="1.7" fill="#d4d4d4"/><rect x="8" y="212.2" width="1" height="1.7" fill="#d4d4d4"/><rect x="9" y="212.2" width="1" height="1.7" fill="#d4d4d4"/><rect x="10" y="212.2" width="1" height="1.7" fill="#d4d4d4"/><rect x="4" y="214.2" width="1" height="1.7" fill="#d4d4d4"/><rect x="4" y="218.2" width="11" height="1.7" fill="#dcdcaa"/><rect x="15" y="218.2" width="1" height="1.7" fill="#d4d4d4"/><rect x="16" y="218.2" width="4" height="1.7" fill="#4fc1ff"/><rect x="20" y="218.2" width="1" height="1.7" fill="#d4d4d4"/><rect x="22" y="218.2" width="1" height="1.7" fill="#d4d4d4"/><rect x="8" y="220.2" width="5" height="1.7" fill="#569cd6"/><rect x="14" y="220.2" width="6" height="1.7" fill="#4fc1ff"/><rect x="21" y="220.2" width="1" height="1.7" fill="#d4d4d4"/><rect x="23" y="220.2" width="3" height="1.7" fill="#569cd6"/><rect x="27" y="220.2" width="4" height="1.7" fill="#4ec9b0"/><rect x="31" y="220.2" width="1" height="1.7" fill="#d4d4d4"/><rect x="32" y="220.2" width="4" height="1.7" fill="#4fc1ff"/><rect x="36" y="220.2" width="1" height="1.7" fill="#d4d4d4"/><rect x="37" y="220.2" width="1" height="1.7" fill="#d4d4d4"/><rect x="8" y="222.2" width="5" height="1.7" fill="#569cd6"/><rect x="14" y="222.2" width="3" height="1.7" fill="#4fc1ff"/><rect x="18" y="222.2" width="1" height="1.7" fill="#d4d4d4"/><rect x="20" y="222.2" width="6" height="1.7" fill="#4fc1ff"/><rect x="26" y="222.2" width="1" height="1.7" fill="#d4d4d4"/><rect x="27" y="222.2" width="6" height="1.7" fill="#dcdcaa"/><rect x="33" y="222.2" width="1" height="1.7" fill="#d4d4d4"/><rect x="34" y="222.2" width="1" height="1.7" fill="#d4d4d4"/><rect x="35" y="222.2" width="1" height="1.7" fill="#d4d4d4"/><rect x="8" y="224.2" width="5" height="1.7" fill="#569cd6"/><rect x="14" y="224.2" width="4" height="1.7" fill="#4fc1ff"/><rect x="19" y="224.2" width="1" height="1.7" fill="#d4d4d4"/><rect x="21" y="224.2" width="6" height="1.7" fill="#4fc1ff"/><rect x="27" y="224.2" width="1" height="1.7" fill="#d4d4d4"/><rect x="28" y="224.2" width="7" height="1.7" fill="#dcdcaa"/><rect x="35" y="224.2" width="1" height="1.7" fill="#d4d4d4"/><rect x="36" y="224.2" width="1" height="1.7" fill="#d4d4d4"/><rect x="38" y="224.2" width="1" height="1.7" fill="#d4d4d4"/><rect x="40" y="224.2" width="3" height="1.7" fill="#4fc1ff"/><rect x="44" y="224.2" width="1" height="1.7" fill="#d4d4d4"/><rect x="46" y="224.2" width="1" height="1.7" fill="#d4d4d4"/><rect x="47" y="224.2" width="3" height="1.7" fill="#4fc1ff"/><rect x="51" y="224.2" width="3" height="1.7" fill="#d4d4d4"/><rect x="55" y="224.2" width="1" height="1.7" fill="#b5cea8"/><rect x="57" y="224.2" width="1" height="1.7" fill="#d4d4d4"/><rect x="59" y="224.2" width="1" height="1.7" fill="#b5cea8"/><rect x="61" y="224.2" width="1" height="1.7" fill="#d4d4d4"/><rect x="63" y="224.2" width="1" height="1.7" fill="#d4d4d4"/><rect x="64" y="224.2" width="1" height="1.7" fill="#d4d4d4"/><rect x="65" y="224.2" width="3" height="1.7" fill="#4fc1ff"/><rect x="69" y="224.2" width="1" height="1.7" fill="#d4d4d4"/><rect x="71" y="224.2" width="1" height="1.7" fill="#b5cea8"/><rect x="72" y="224.2" width="1" height="1.7" fill="#d4d4d4"/><rect x="73" y="224.2" width="1" height="1.7" fill="#d4d4d4"/><rect x="74" y="224.2" width="1" height="1.7" fill="#d4d4d4"/><rect x="8" y="226.2" width="6" height="1.7" fill="#4fc1ff"/><rect x="14" y="226.2" width="1" height="1.7" fill="#d4d4d4"/><rect x="15" y="226.2" width="7" height="1.7" fill="#dcdcaa"/><rect x="22" y="226.2" width="1" height="1.7" fill="#d4d4d4"/><rect x="23" y="226.2" width="4" height="1.7" fill="#4fc1ff"/><rect x="27" y="226.2" width="1" height="1.7" fill="#d4d4d4"/><rect x="28" y="226.2" width="1" height="1.7" fill="#d4d4d4"/><rect x="8" y="228.2" width="6" height="1.7" fill="#4fc1ff"/><rect x="14" y="228.2" width="1" height="1.7" fill="#d4d4d4"/><rect x="15" y="228.2" width="8" height="1.7" fill="#dcdcaa"/><rect x="23" y="228.2" width="1" height="1.7" fill="#d4d4d4"/><rect x="24" y="228.2" width="1" height="1.7" fill="#b5cea8"/><rect x="25" y="228.2" width="1" height="1.7" fill="#d4d4d4"/><rect x="27" y="228.2" width="1" height="1.7" fill="#b5cea8"/><rect x="28" y="228.2" width="1" height="1.7" fill="#d4d4d4"/><rect x="30" y="228.2" width="1" height="1.7" fill="#b5cea8"/><rect x="31" y="228.2" width="1" height="1.7" fill="#d4d4d4"/><rect x="33" y="228.2" width="1" height="1.7" fill="#b5cea8"/><rect x="34" y="228.2" width="1" height="1.7" fill="#d4d4d4"/><rect x="35" y="228.2" width="1" height="1.7" fill="#d4d4d4"/><rect x="8" y="230.2" width="6" height="1.7" fill="#c586c0"/><rect x="15" y="230.2" width="6" height="1.7" fill="#4fc1ff"/><rect x="21" y="230.2" width="1" height="1.7" fill="#d4d4d4"/><rect x="4" y="232.2" width="1" height="1.7" fill="#d4d4d4"/><rect x="4" y="236.2" width="10" height="1.7" fill="#dcdcaa"/><rect x="14" y="236.2" width="1" height="1.7" fill="#d4d4d4"/><rect x="15" y="236.2" width="4" height="1.7" fill="#9cdcfe"/><rect x="19" y="236.2" width="1" height="1.7" fill="#d4d4d4"/><rect x="21" y="236.2" width="1" height="1.7" fill="#d4d4d4"/><rect x="8" y="238.2" width="4" height="1.7" fill="#569cd6"/><rect x="12" y="238.2" width="1" height="1.7" fill="#d4d4d4"/><rect x="13" y="238.2" width="16" height="1.7" fill="#9cdcfe"/><rect x="29" y="238.2" width="1" height="1.7" fill="#d4d4d4"/><rect x="30" y="238.2" width="7" height="1.7" fill="#dcdcaa"/><rect x="37" y="238.2" width="1" height="1.7" fill="#d4d4d4"/><rect x="38" y="238.2" width="4" height="1.7" fill="#569cd6"/><rect x="42" y="238.2" width="1" height="1.7" fill="#d4d4d4"/><rect x="43" y="238.2" width="16" height="1.7" fill="#9cdcfe"/><rect x="59" y="238.2" width="1" height="1.7" fill="#d4d4d4"/><rect x="60" y="238.2" width="7" height="1.7" fill="#dcdcaa"/><rect x="67" y="238.2" width="1" height="1.7" fill="#d4d4d4"/><rect x="68" y="238.2" width="1" height="1.7" fill="#d4d4d4"/><rect x="70" y="238.2" width="1" height="1.7" fill="#d4d4d4"/><rect x="72" y="238.2" width="4" height="1.7" fill="#9cdcfe"/><rect x="76" y="238.2" width="1" height="1.7" fill="#d4d4d4"/><rect x="77" y="238.2" width="1" height="1.7" fill="#d4d4d4"/><rect x="8" y="240.2" width="4" height="1.7" fill="#569cd6"/><rect x="12" y="240.2" width="1" height="1.7" fill="#d4d4d4"/><rect x="13" y="240.2" width="25" height="1.7" fill="#dcdcaa"/><rect x="38" y="240.2" width="1" height="1.7" fill="#d4d4d4"/><rect x="39" y="240.2" width="1" height="1.7" fill="#d4d4d4"/><rect x="40" y="240.2" width="1" height="1.7" fill="#d4d4d4"/><rect x="4" y="242.2" width="1" height="1.7" fill="#d4d4d4"/><rect x="4" y="246.2" width="17" height="1.7" fill="#dcdcaa"/><rect x="21" y="246.2" width="1" height="1.7" fill="#d4d4d4"/><rect x="22" y="246.2" width="1" height="1.7" fill="#d4d4d4"/><rect x="24" y="246.2" width="1" height="1.7" fill="#d4d4d4"/><rect x="8" y="248.2" width="5" height="1.7" fill="#569cd6"/><rect x="14" y="248.2" width="7" height="1.7" fill="#4fc1ff"/><rect x="22" y="248.2" width="1" height="1.7" fill="#d4d4d4"/><rect x="24" y="248.2" width="3" height="1.7" fill="#569cd6"/><rect x="28" y="248.2" width="4" height="1.7" fill="#4ec9b0"/><rect x="32" y="248.2" width="1" height="1.7" fill="#d4d4d4"/><rect x="33" y="248.2" width="4" height="1.7" fill="#569cd6"/><rect x="37" y="248.2" width="1" height="1.7" fill="#d4d4d4"/><rect x="38" y="248.2" width="16" height="1.7" fill="#9cdcfe"/><rect x="54" y="248.2" width="1" height="1.7" fill="#d4d4d4"/><rect x="55" y="248.2" width="1" height="1.7" fill="#d4d4d4"/><rect x="8" y="250.2" width="7" height="1.7" fill="#4fc1ff"/><rect x="15" y="250.2" width="1" height="1.7" fill="#d4d4d4"/><rect x="16" y="250.2" width="7" height="1.7" fill="#dcdcaa"/><rect x="23" y="250.2" width="1" height="1.7" fill="#d4d4d4"/><rect x="24" y="250.2" width="7" height="1.7" fill="#4fc1ff"/><rect x="31" y="250.2" width="1" height="1.7" fill="#d4d4d4"/><rect x="32" y="250.2" width="7" height="1.7" fill="#dcdcaa"/><rect x="39" y="250.2" width="1" height="1.7" fill="#d4d4d4"/><rect x="40" y="250.2" width="1" height="1.7" fill="#d4d4d4"/><rect x="42" y="250.2" width="1" height="1.7" fill="#d4d4d4"/><rect x="44" y="250.2" width="1" height="1.7" fill="#b5cea8"/><rect x="45" y="250.2" width="1" height="1.7" fill="#d4d4d4"/><rect x="46" y="250.2" width="1" height="1.7" fill="#d4d4d4"/><rect x="8" y="254.2" width="5" height="1.7" fill="#569cd6"/><rect x="14" y="254.2" width="7" height="1.7" fill="#4fc1ff"/><rect x="22" y="254.2" width="1" height="1.7" fill="#d4d4d4"/><rect x="24" y="254.2" width="8" height="1.7" fill="#9cdcfe"/><rect x="32" y="254.2" width="1" height="1.7" fill="#d4d4d4"/><rect x="33" y="254.2" width="14" height="1.7" fill="#dcdcaa"/><rect x="47" y="254.2" width="1" height="1.7" fill="#d4d4d4"/><rect x="48" y="254.2" width="13" height="1.7" fill="#ce9178"/><rect x="61" y="254.2" width="1" height="1.7" fill="#d4d4d4"/><rect x="62" y="254.2" width="1" height="1.7" fill="#d4d4d4"/><rect x="8" y="256.1" width="5" height="1.7" fill="#569cd6"/><rect x="14" y="256.1" width="10" height="1.7" fill="#4fc1ff"/><rect x="25" y="256.1" width="1" height="1.7" fill="#d4d4d4"/><rect x="27" y="256.1" width="4" height="1.7" fill="#569cd6"/><rect x="31" y="256.1" width="1" height="1.7" fill="#d4d4d4"/><rect x="32" y="256.1" width="13" height="1.7" fill="#dcdcaa"/><rect x="45" y="256.1" width="1" height="1.7" fill="#d4d4d4"/><rect x="46" y="256.1" width="4" height="1.7" fill="#569cd6"/><rect x="50" y="256.1" width="1" height="1.7" fill="#d4d4d4"/><rect x="51" y="256.1" width="16" height="1.7" fill="#9cdcfe"/><rect x="67" y="256.1" width="1" height="1.7" fill="#d4d4d4"/><rect x="68" y="256.1" width="1" height="1.7" fill="#d4d4d4"/><rect x="8" y="260.1" width="2" height="1.7" fill="#c586c0"/><rect x="11" y="260.1" width="1" height="1.7" fill="#d4d4d4"/><rect x="12" y="260.1" width="10" height="1.7" fill="#4fc1ff"/><rect x="22" y="260.1" width="1" height="1.7" fill="#d4d4d4"/><rect x="24" y="260.1" width="1" height="1.7" fill="#d4d4d4"/><rect x="12" y="262.1" width="7" height="1.7" fill="#4fc1ff"/><rect x="19" y="262.1" width="1" height="1.7" fill="#d4d4d4"/><rect x="20" y="262.1" width="11" height="1.7" fill="#9cdcfe"/><rect x="32" y="262.1" width="1" height="1.7" fill="#d4d4d4"/><rect x="34" y="262.1" width="5" height="1.7" fill="#ce9178"/><rect x="40" y="262.1" width="5" height="1.7" fill="#ce9178"/><rect x="45" y="262.1" width="1" height="1.7" fill="#d4d4d4"/><rect x="8" y="264.1" width="1" height="1.7" fill="#d4d4d4"/><rect x="10" y="264.1" width="4" height="1.7" fill="#c586c0"/><rect x="15" y="264.1" width="1" height="1.7" fill="#d4d4d4"/><rect x="12" y="266.1" width="7" height="1.7" fill="#4fc1ff"/><rect x="19" y="266.1" width="1" height="1.7" fill="#d4d4d4"/><rect x="20" y="266.1" width="11" height="1.7" fill="#9cdcfe"/><rect x="32" y="266.1" width="1" height="1.7" fill="#d4d4d4"/><rect x="16" y="268.1" width="1" height="1.7" fill="#ce9178"/><rect x="17" y="268.1" width="2" height="1.7" fill="#569cd6"/><rect x="19" y="268.1" width="4" height="1.7" fill="#569cd6"/><rect x="23" y="268.1" width="1" height="1.7" fill="#d4d4d4"/><rect x="24" y="268.1" width="16" height="1.7" fill="#9cdcfe"/><rect x="40" y="268.1" width="1" height="1.7" fill="#d4d4d4"/><rect x="41" y="268.1" width="18" height="1.7" fill="#dcdcaa"/><rect x="59" y="268.1" width="1" height="1.7" fill="#d4d4d4"/><rect x="60" y="268.1" width="1" height="1.7" fill="#d4d4d4"/><rect x="61" y="268.1" width="1" height="1.7" fill="#569cd6"/><rect x="63" y="268.1" width="1" height="1.7" fill="#ce9178"/><rect x="65" y="268.1" width="2" height="1.7" fill="#569cd6"/><rect x="67" y="268.1" width="7" height="1.7" fill="#4fc1ff"/><rect x="74" y="268.1" width="1" height="1.7" fill="#d4d4d4"/><rect x="75" y="268.1" width="18" height="1.7" fill="#dcdcaa"/><rect x="93" y="268.1" width="1" height="1.7" fill="#d4d4d4"/><rect x="94" y="268.1" width="1" height="1.7" fill="#d4d4d4"/><rect x="95" y="268.1" width="1" height="1.7" fill="#569cd6"/><rect x="96" y="268.1" width="1" height="1.7" fill="#ce9178"/><rect x="97" y="268.1" width="1" height="1.7" fill="#d4d4d4"/><rect x="8" y="270.1" width="1" height="1.7" fill="#d4d4d4"/><rect x="4" y="272.1" width="1" height="1.7" fill="#d4d4d4"/><rect x="4" y="276.1" width="13" height="1.7" fill="#dcdcaa"/><rect x="17" y="276.1" width="1" height="1.7" fill="#d4d4d4"/><rect x="18" y="276.1" width="9" height="1.7" fill="#9cdcfe"/><rect x="27" y="276.1" width="1" height="1.7" fill="#d4d4d4"/><rect x="29" y="276.1" width="1" height="1.7" fill="#d4d4d4"/><rect x="8" y="278.1" width="5" height="1.7" fill="#569cd6"/><rect x="14" y="278.1" width="7" height="1.7" fill="#4fc1ff"/><rect x="22" y="278.1" width="1" height="1.7" fill="#d4d4d4"/><rect x="24" y="278.1" width="4" height="1.7" fill="#569cd6"/><rect x="28" y="278.1" width="1" height="1.7" fill="#d4d4d4"/><rect x="29" y="278.1" width="11" height="1.7" fill="#dcdcaa"/><rect x="40" y="278.1" width="1" height="1.7" fill="#d4d4d4"/><rect x="41" y="278.1" width="3" height="1.7" fill="#569cd6"/><rect x="45" y="278.1" width="4" height="1.7" fill="#4ec9b0"/><rect x="49" y="278.1" width="1" height="1.7" fill="#d4d4d4"/><rect x="50" y="278.1" width="1" height="1.7" fill="#d4d4d4"/><rect x="51" y="278.1" width="1" height="1.7" fill="#d4d4d4"/><rect x="52" y="278.1" width="1" height="1.7" fill="#d4d4d4"/><rect x="8" y="280.1" width="5" height="1.7" fill="#569cd6"/><rect x="14" y="280.1" width="4" height="1.7" fill="#4fc1ff"/><rect x="19" y="280.1" width="1" height="1.7" fill="#d4d4d4"/><rect x="21" y="280.1" width="4" height="1.7" fill="#4ec9b0"/><rect x="25" y="280.1" width="1" height="1.7" fill="#d4d4d4"/><rect x="26" y="280.1" width="3" height="1.7" fill="#dcdcaa"/><rect x="29" y="280.1" width="1" height="1.7" fill="#d4d4d4"/><rect x="30" y="280.1" width="7" height="1.7" fill="#4fc1ff"/><rect x="38" y="280.1" width="1" height="1.7" fill="#d4d4d4"/><rect x="40" y="280.1" width="9" height="1.7" fill="#9cdcfe"/><rect x="49" y="280.1" width="1" height="1.7" fill="#d4d4d4"/><rect x="50" y="280.1" width="1" height="1.7" fill="#d4d4d4"/><rect x="8" y="282.1" width="7" height="1.7" fill="#4fc1ff"/><rect x="15" y="282.1" width="1" height="1.7" fill="#d4d4d4"/><rect x="16" y="282.1" width="8" height="1.7" fill="#dcdcaa"/><rect x="24" y="282.1" width="1" height="1.7" fill="#d4d4d4"/><rect x="25" y="282.1" width="1" height="1.7" fill="#b5cea8"/><rect x="26" y="282.1" width="1" height="1.7" fill="#d4d4d4"/><rect x="28" y="282.1" width="1" height="1.7" fill="#b5cea8"/><rect x="29" y="282.1" width="1" height="1.7" fill="#d4d4d4"/><rect x="31" y="282.1" width="1" height="1.7" fill="#b5cea8"/><rect x="32" y="282.1" width="1" height="1.7" fill="#d4d4d4"/><rect x="34" y="282.1" width="1" height="1.7" fill="#b5cea8"/><rect x="35" y="282.1" width="1" height="1.7" fill="#d4d4d4"/><rect x="36" y="282.1" width="1" height="1.7" fill="#d4d4d4"/><rect x="8" y="286.1" width="6" height="1.7" fill="#c586c0"/><rect x="15" y="286.1" width="4" height="1.7" fill="#4fc1ff"/><rect x="20" y="286.1" width="1" height="1.7" fill="#d4d4d4"/><rect x="22" y="286.1" width="2" height="1.7" fill="#b5cea8"/><rect x="25" y="286.1" width="1" height="1.7" fill="#d4d4d4"/><rect x="27" y="286.1" width="2" height="1.7" fill="#b5cea8"/><rect x="30" y="286.1" width="1" height="1.7" fill="#d4d4d4"/><rect x="32" y="286.1" width="2" height="1.7" fill="#b5cea8"/><rect x="35" y="286.1" width="1" height="1.7" fill="#d4d4d4"/><rect x="37" y="286.1" width="4" height="1.7" fill="#b5cea8"/><rect x="41" y="286.1" width="1" height="1.7" fill="#d4d4d4"/><rect x="4" y="288.1" width="1" height="1.7" fill="#d4d4d4"/><rect x="4" y="292.1" width="14" height="1.7" fill="#dcdcaa"/><rect x="18" y="292.1" width="1" height="1.7" fill="#d4d4d4"/><rect x="19" y="292.1" width="7" height="1.7" fill="#9cdcfe"/><rect x="26" y="292.1" width="1" height="1.7" fill="#d4d4d4"/><rect x="28" y="292.1" width="1" height="1.7" fill="#d4d4d4"/><rect x="8" y="294.1" width="5" height="1.7" fill="#569cd6"/><rect x="14" y="294.1" width="9" height="1.7" fill="#4fc1ff"/><rect x="24" y="294.1" width="1" height="1.7" fill="#d4d4d4"/><rect x="26" y="294.1" width="8" height="1.7" fill="#9cdcfe"/><rect x="34" y="294.1" width="1" height="1.7" fill="#d4d4d4"/><rect x="35" y="294.1" width="14" height="1.7" fill="#dcdcaa"/><rect x="49" y="294.1" width="1" height="1.7" fill="#d4d4d4"/><rect x="50" y="294.1" width="13" height="1.7" fill="#ce9178"/><rect x="63" y="294.1" width="1" height="1.7" fill="#d4d4d4"/><rect x="64" y="294.1" width="1" height="1.7" fill="#d4d4d4"/><rect x="8" y="298.1" width="2" height="1.7" fill="#c586c0"/><rect x="11" y="298.1" width="1" height="1.7" fill="#d4d4d4"/><rect x="12" y="298.1" width="7" height="1.7" fill="#9cdcfe"/><rect x="19" y="298.1" width="1" height="1.7" fill="#d4d4d4"/><rect x="20" y="298.1" width="6" height="1.7" fill="#9cdcfe"/><rect x="27" y="298.1" width="3" height="1.7" fill="#d4d4d4"/><rect x="31" y="298.1" width="1" height="1.7" fill="#b5cea8"/><rect x="32" y="298.1" width="1" height="1.7" fill="#d4d4d4"/><rect x="34" y="298.1" width="1" height="1.7" fill="#d4d4d4"/><rect x="12" y="300.1" width="9" height="1.7" fill="#4fc1ff"/><rect x="21" y="300.1" width="1" height="1.7" fill="#d4d4d4"/><rect x="22" y="300.1" width="9" height="1.7" fill="#9cdcfe"/><rect x="32" y="300.1" width="1" height="1.7" fill="#d4d4d4"/><rect x="34" y="300.1" width="5" height="1.7" fill="#ce9178"/><rect x="40" y="300.1" width="21" height="1.7" fill="#ce9178"/><rect x="62" y="300.1" width="7" height="1.7" fill="#ce9178"/><rect x="70" y="300.1" width="3" height="1.7" fill="#ce9178"/><rect x="74" y="300.1" width="4" height="1.7" fill="#ce9178"/><rect x="79" y="300.1" width="4" height="1.7" fill="#ce9178"/><rect x="84" y="300.1" width="10" height="1.7" fill="#ce9178"/><rect x="94" y="300.1" width="1" height="1.7" fill="#d4d4d4"/><rect x="12" y="302.1" width="6" height="1.7" fill="#c586c0"/><rect x="18" y="302.1" width="1" height="1.7" fill="#d4d4d4"/><rect x="8" y="304.1" width="1" height="1.7" fill="#d4d4d4"/><rect x="8" y="308.1" width="9" height="1.7" fill="#4fc1ff"/><rect x="17" y="308.1" width="1" height="1.7" fill="#d4d4d4"/><rect x="18" y="308.1" width="9" height="1.7" fill="#9cdcfe"/><rect x="28" y="308.1" width="1" height="1.7" fill="#d4d4d4"/><rect x="30" y="308.1" width="7" height="1.7" fill="#9cdcfe"/><rect x="37" y="308.1" width="1" height="1.7" fill="#d4d4d4"/><rect x="38" y="308.1" width="3" height="1.7" fill="#dcdcaa"/><rect x="41" y="308.1" width="1" height="1.7" fill="#d4d4d4"/><rect x="42" y="308.1" width="5" height="1.7" fill="#4fc1ff"/><rect x="48" y="308.1" width="2" height="1.7" fill="#569cd6"/><rect x="51" y="308.1" width="1" height="1.7" fill="#ce9178"/><rect x="12" y="310.1" width="4" height="1.7" fill="#ce9178"/><rect x="17" y="310.1" width="18" height="1.7" fill="#ce9178"/><rect x="36" y="310.1" width="9" height="1.7" fill="#ce9178"/><rect x="45" y="310.1" width="2" height="1.7" fill="#569cd6"/><rect x="47" y="310.1" width="5" height="1.7" fill="#4fc1ff"/><rect x="52" y="310.1" width="1" height="1.7" fill="#d4d4d4"/><rect x="53" y="310.1" width="2" height="1.7" fill="#9cdcfe"/><rect x="55" y="310.1" width="1" height="1.7" fill="#569cd6"/><rect x="56" y="310.1" width="1" height="1.7" fill="#ce9178"/><rect x="58" y="310.1" width="25" height="1.7" fill="#ce9178"/><rect x="83" y="310.1" width="2" height="1.7" fill="#569cd6"/><rect x="85" y="310.1" width="5" height="1.7" fill="#4fc1ff"/><rect x="90" y="310.1" width="1" height="1.7" fill="#d4d4d4"/><rect x="91" y="310.1" width="2" height="1.7" fill="#9cdcfe"/><rect x="93" y="310.1" width="1" height="1.7" fill="#569cd6"/><rect x="94" y="310.1" width="3" height="1.7" fill="#ce9178"/><rect x="16" y="312.1" width="4" height="1.7" fill="#ce9178"/><rect x="21" y="312.1" width="19" height="1.7" fill="#ce9178"/><rect x="40" y="312.1" width="2" height="1.7" fill="#569cd6"/><rect x="42" y="312.1" width="4" height="1.7" fill="#569cd6"/><rect x="46" y="312.1" width="1" height="1.7" fill="#d4d4d4"/><rect x="47" y="312.1" width="10" height="1.7" fill="#dcdcaa"/><rect x="57" y="312.1" width="1" height="1.7" fill="#d4d4d4"/><rect x="58" y="312.1" width="5" height="1.7" fill="#4fc1ff"/><rect x="63" y="312.1" width="1" height="1.7" fill="#d4d4d4"/><rect x="64" y="312.1" width="10" height="1.7" fill="#9cdcfe"/><rect x="74" y="312.1" width="1" height="1.7" fill="#d4d4d4"/><rect x="75" y="312.1" width="1" height="1.7" fill="#569cd6"/><rect x="76" y="312.1" width="6" height="1.7" fill="#ce9178"/><rect x="16" y="314.1" width="4" height="1.7" fill="#ce9178"/><rect x="21" y="314.1" width="22" height="1.7" fill="#ce9178"/><rect x="43" y="314.1" width="2" height="1.7" fill="#569cd6"/><rect x="45" y="314.1" width="4" height="1.7" fill="#569cd6"/><rect x="49" y="314.1" width="1" height="1.7" fill="#d4d4d4"/><rect x="50" y="314.1" width="12" height="1.7" fill="#dcdcaa"/><rect x="62" y="314.1" width="1" height="1.7" fill="#d4d4d4"/><rect x="63" y="314.1" width="5" height="1.7" fill="#4fc1ff"/><rect x="68" y="314.1" width="1" height="1.7" fill="#d4d4d4"/><rect x="69" y="314.1" width="7" height="1.7" fill="#9cdcfe"/><rect x="76" y="314.1" width="1" height="1.7" fill="#d4d4d4"/><rect x="78" y="314.1" width="3" height="1.7" fill="#b5cea8"/><rect x="81" y="314.1" width="1" height="1.7" fill="#d4d4d4"/><rect x="82" y="314.1" width="1" height="1.7" fill="#569cd6"/><rect x="83" y="314.1" width="6" height="1.7" fill="#ce9178"/><rect x="12" y="316.1" width="6" height="1.7" fill="#ce9178"/><rect x="8" y="318.1" width="1" height="1.7" fill="#ce9178"/><rect x="9" y="318.1" width="1" height="1.7" fill="#d4d4d4"/><rect x="10" y="318.1" width="1" height="1.7" fill="#d4d4d4"/><rect x="11" y="318.1" width="4" height="1.7" fill="#dcdcaa"/><rect x="15" y="318.1" width="1" height="1.7" fill="#d4d4d4"/><rect x="16" y="318.1" width="2" height="1.7" fill="#ce9178"/><rect x="18" y="318.1" width="1" height="1.7" fill="#d4d4d4"/><rect x="19" y="318.1" width="1" height="1.7" fill="#d4d4d4"/><rect x="4" y="320.1" width="1" height="1.7" fill="#d4d4d4"/><rect x="4" y="324.1" width="11" height="1.7" fill="#dcdcaa"/><rect x="15" y="324.1" width="1" height="1.7" fill="#d4d4d4"/><rect x="16" y="324.1" width="7" height="1.7" fill="#9cdcfe"/><rect x="23" y="324.1" width="1" height="1.7" fill="#d4d4d4"/><rect x="25" y="324.1" width="1" height="1.7" fill="#d4d4d4"/><rect x="8" y="326.1" width="5" height="1.7" fill="#569cd6"/><rect x="14" y="326.1" width="5" height="1.7" fill="#4fc1ff"/><rect x="20" y="326.1" width="1" height="1.7" fill="#d4d4d4"/><rect x="22" y="326.1" width="4" height="1.7" fill="#569cd6"/><rect x="26" y="326.1" width="1" height="1.7" fill="#d4d4d4"/><rect x="27" y="326.1" width="7" height="1.7" fill="#9cdcfe"/><rect x="34" y="326.1" width="1" height="1.7" fill="#d4d4d4"/><rect x="35" y="326.1" width="4" height="1.7" fill="#dcdcaa"/><rect x="39" y="326.1" width="1" height="1.7" fill="#d4d4d4"/><rect x="40" y="326.1" width="1" height="1.7" fill="#9cdcfe"/><rect x="42" y="326.1" width="2" height="1.7" fill="#569cd6"/><rect x="45" y="326.1" width="1" height="1.7" fill="#9cdcfe"/><rect x="46" y="326.1" width="1" height="1.7" fill="#d4d4d4"/><rect x="47" y="326.1" width="2" height="1.7" fill="#9cdcfe"/><rect x="50" y="326.1" width="3" height="1.7" fill="#d4d4d4"/><rect x="54" y="326.1" width="7" height="1.7" fill="#9cdcfe"/><rect x="61" y="326.1" width="1" height="1.7" fill="#d4d4d4"/><rect x="62" y="326.1" width="1" height="1.7" fill="#d4d4d4"/><rect x="8" y="328.1" width="2" height="1.7" fill="#c586c0"/><rect x="11" y="328.1" width="1" height="1.7" fill="#d4d4d4"/><rect x="12" y="328.1" width="5" height="1.7" fill="#4fc1ff"/><rect x="17" y="328.1" width="1" height="1.7" fill="#d4d4d4"/><rect x="19" y="328.1" width="1" height="1.7" fill="#d4d4d4"/><rect x="12" y="330.1" width="8" height="1.7" fill="#9cdcfe"/><rect x="20" y="330.1" width="1" height="1.7" fill="#d4d4d4"/><rect x="21" y="330.1" width="14" height="1.7" fill="#dcdcaa"/><rect x="35" y="330.1" width="1" height="1.7" fill="#d4d4d4"/><rect x="36" y="330.1" width="11" height="1.7" fill="#ce9178"/><rect x="47" y="330.1" width="1" height="1.7" fill="#d4d4d4"/><rect x="48" y="330.1" width="1" height="1.7" fill="#d4d4d4"/><rect x="49" y="330.1" width="5" height="1.7" fill="#9cdcfe"/><rect x="55" y="330.1" width="1" height="1.7" fill="#d4d4d4"/><rect x="57" y="330.1" width="5" height="1.7" fill="#4fc1ff"/><rect x="62" y="330.1" width="1" height="1.7" fill="#d4d4d4"/><rect x="63" y="330.1" width="7" height="1.7" fill="#9cdcfe"/><rect x="70" y="330.1" width="1" height="1.7" fill="#d4d4d4"/><rect x="12" y="332.1" width="4" height="1.7" fill="#569cd6"/><rect x="16" y="332.1" width="1" height="1.7" fill="#d4d4d4"/><rect x="17" y="332.1" width="14" height="1.7" fill="#9cdcfe"/><rect x="32" y="332.1" width="1" height="1.7" fill="#d4d4d4"/><rect x="34" y="332.1" width="5" height="1.7" fill="#4fc1ff"/><rect x="39" y="332.1" width="1" height="1.7" fill="#d4d4d4"/><rect x="40" y="332.1" width="2" height="1.7" fill="#9cdcfe"/><rect x="42" y="332.1" width="1" height="1.7" fill="#d4d4d4"/><rect x="12" y="334.1" width="4" height="1.7" fill="#569cd6"/><rect x="16" y="334.1" width="1" height="1.7" fill="#d4d4d4"/><rect x="17" y="334.1" width="12" height="1.7" fill="#dcdcaa"/><rect x="29" y="334.1" width="1" height="1.7" fill="#d4d4d4"/><rect x="30" y="334.1" width="1" height="1.7" fill="#ce9178"/><rect x="31" y="334.1" width="7" height="1.7" fill="#ce9178"/><rect x="39" y="334.1" width="5" height="1.7" fill="#ce9178"/><rect x="45" y="334.1" width="4" height="1.7" fill="#ce9178"/><rect x="50" y="334.1" width="2" height="1.7" fill="#569cd6"/><rect x="52" y="334.1" width="4" height="1.7" fill="#569cd6"/><rect x="56" y="334.1" width="1" height="1.7" fill="#d4d4d4"/><rect x="57" y="334.1" width="10" height="1.7" fill="#dcdcaa"/><rect x="67" y="334.1" width="1" height="1.7" fill="#d4d4d4"/><rect x="68" y="334.1" width="5" height="1.7" fill="#4fc1ff"/><rect x="73" y="334.1" width="1" height="1.7" fill="#d4d4d4"/><rect x="74" y="334.1" width="10" height="1.7" fill="#9cdcfe"/><rect x="84" y="334.1" width="1" height="1.7" fill="#d4d4d4"/><rect x="85" y="334.1" width="1" height="1.7" fill="#569cd6"/><rect x="86" y="334.1" width="1" height="1.7" fill="#ce9178"/><rect x="87" y="334.1" width="1" height="1.7" fill="#d4d4d4"/><rect x="88" y="334.1" width="1" height="1.7" fill="#d4d4d4"/><rect x="8" y="336.1" width="1" height="1.7" fill="#d4d4d4"/><rect x="4" y="338.1" width="1" height="1.7" fill="#d4d4d4"/><rect x="4" y="342.1" width="13" height="1.7" fill="#dcdcaa"/><rect x="17" y="342.1" width="1" height="1.7" fill="#d4d4d4"/><rect x="18" y="342.1" width="1" height="1.7" fill="#d4d4d4"/><rect x="20" y="342.1" width="1" height="1.7" fill="#d4d4d4"/><rect x="8" y="344.1" width="5" height="1.7" fill="#569cd6"/><rect x="14" y="344.1" width="4" height="1.7" fill="#4fc1ff"/><rect x="19" y="344.1" width="1" height="1.7" fill="#d4d4d4"/><rect x="21" y="344.1" width="4" height="1.7" fill="#569cd6"/><rect x="25" y="344.1" width="1" height="1.7" fill="#d4d4d4"/><rect x="26" y="344.1" width="7" height="1.7" fill="#9cdcfe"/><rect x="33" y="344.1" width="1" height="1.7" fill="#d4d4d4"/><rect x="34" y="344.1" width="5" height="1.7" fill="#dcdcaa"/><rect x="39" y="344.1" width="1" height="1.7" fill="#d4d4d4"/><rect x="40" y="344.1" width="1" height="1.7" fill="#b5cea8"/><rect x="41" y="344.1" width="1" height="1.7" fill="#d4d4d4"/><rect x="43" y="344.1" width="2" height="1.7" fill="#b5cea8"/><rect x="45" y="344.1" width="1" height="1.7" fill="#d4d4d4"/><rect x="46" y="344.1" width="1" height="1.7" fill="#d4d4d4"/><rect x="8" y="346.1" width="5" height="1.7" fill="#569cd6"/><rect x="14" y="346.1" width="5" height="1.7" fill="#4fc1ff"/><rect x="20" y="346.1" width="1" height="1.7" fill="#d4d4d4"/><rect x="22" y="346.1" width="4" height="1.7" fill="#4fc1ff"/><rect x="26" y="346.1" width="1" height="1.7" fill="#d4d4d4"/><rect x="27" y="346.1" width="3" height="1.7" fill="#dcdcaa"/><rect x="30" y="346.1" width="1" height="1.7" fill="#d4d4d4"/><rect x="31" y="346.1" width="1" height="1.7" fill="#d4d4d4"/><rect x="32" y="346.1" width="5" height="1.7" fill="#4fc1ff"/><rect x="37" y="346.1" width="1" height="1.7" fill="#d4d4d4"/><rect x="39" y="346.1" width="1" height="1.7" fill="#9cdcfe"/><rect x="40" y="346.1" width="1" height="1.7" fill="#d4d4d4"/><rect x="42" y="346.1" width="2" height="1.7" fill="#569cd6"/><rect x="45" y="346.1" width="1" height="1.7" fill="#d4d4d4"/><rect x="12" y="348.1" width="5" height="1.7" fill="#569cd6"/><rect x="18" y="348.1" width="4" height="1.7" fill="#4fc1ff"/><rect x="23" y="348.1" width="1" height="1.7" fill="#d4d4d4"/><rect x="25" y="348.1" width="3" height="1.7" fill="#569cd6"/><rect x="29" y="348.1" width="4" height="1.7" fill="#4ec9b0"/><rect x="33" y="348.1" width="1" height="1.7" fill="#d4d4d4"/><rect x="34" y="348.1" width="5" height="1.7" fill="#4fc1ff"/><rect x="39" y="348.1" width="1" height="1.7" fill="#d4d4d4"/><rect x="40" y="348.1" width="4" height="1.7" fill="#9cdcfe"/><rect x="44" y="348.1" width="1" height="1.7" fill="#d4d4d4"/><rect x="45" y="348.1" width="1" height="1.7" fill="#d4d4d4"/><rect x="12" y="350.1" width="5" height="1.7" fill="#569cd6"/><rect x="18" y="350.1" width="2" height="1.7" fill="#4fc1ff"/><rect x="21" y="350.1" width="1" height="1.7" fill="#d4d4d4"/><rect x="23" y="350.1" width="5" height="1.7" fill="#4fc1ff"/><rect x="28" y="350.1" width="1" height="1.7" fill="#d4d4d4"/><rect x="29" y="350.1" width="2" height="1.7" fill="#9cdcfe"/><rect x="31" y="350.1" width="1" height="1.7" fill="#d4d4d4"/><rect x="12" y="352.1" width="6" height="1.7" fill="#c586c0"/><rect x="19" y="352.1" width="1" height="1.7" fill="#ce9178"/><rect x="20" y="352.1" width="3" height="1.7" fill="#ce9178"/><rect x="24" y="352.1" width="9" height="1.7" fill="#ce9178"/><rect x="33" y="352.1" width="2" height="1.7" fill="#569cd6"/><rect x="35" y="352.1" width="2" height="1.7" fill="#4fc1ff"/><rect x="37" y="352.1" width="1" height="1.7" fill="#569cd6"/><rect x="38" y="352.1" width="2" height="1.7" fill="#ce9178"/><rect x="40" y="352.1" width="2" height="1.7" fill="#569cd6"/><rect x="42" y="352.1" width="4" height="1.7" fill="#4fc1ff"/><rect x="46" y="352.1" width="1" height="1.7" fill="#d4d4d4"/><rect x="47" y="352.1" width="12" height="1.7" fill="#dcdcaa"/><rect x="59" y="352.1" width="1" height="1.7" fill="#d4d4d4"/><rect x="60" y="352.1" width="1" height="1.7" fill="#d4d4d4"/><rect x="61" y="352.1" width="1" height="1.7" fill="#569cd6"/><rect x="20" y="354.1" width="2" height="1.7" fill="#569cd6"/><rect x="22" y="354.1" width="4" height="1.7" fill="#569cd6"/><rect x="26" y="354.1" width="1" height="1.7" fill="#d4d4d4"/><rect x="27" y="354.1" width="12" height="1.7" fill="#dcdcaa"/><rect x="39" y="354.1" width="1" height="1.7" fill="#d4d4d4"/><rect x="40" y="354.1" width="5" height="1.7" fill="#4fc1ff"/><rect x="45" y="354.1" width="1" height="1.7" fill="#d4d4d4"/><rect x="46" y="354.1" width="7" height="1.7" fill="#9cdcfe"/><rect x="53" y="354.1" width="1" height="1.7" fill="#d4d4d4"/><rect x="55" y="354.1" width="2" height="1.7" fill="#b5cea8"/><rect x="57" y="354.1" width="1" height="1.7" fill="#d4d4d4"/><rect x="58" y="354.1" width="1" height="1.7" fill="#569cd6"/><rect x="59" y="354.1" width="5" height="1.7" fill="#ce9178"/><rect x="64" y="354.1" width="1" height="1.7" fill="#ce9178"/><rect x="65" y="354.1" width="1" height="1.7" fill="#d4d4d4"/><rect x="8" y="356.1" width="1" height="1.7" fill="#d4d4d4"/><rect x="9" y="356.1" width="1" height="1.7" fill="#d4d4d4"/><rect x="10" y="356.1" width="1" height="1.7" fill="#d4d4d4"/><rect x="11" y="356.1" width="4" height="1.7" fill="#dcdcaa"/><rect x="15" y="356.1" width="1" height="1.7" fill="#d4d4d4"/><rect x="16" y="356.1" width="2" height="1.7" fill="#ce9178"/><rect x="18" y="356.1" width="1" height="1.7" fill="#d4d4d4"/><rect x="19" y="356.1" width="1" height="1.7" fill="#d4d4d4"/><rect x="8" y="360.1" width="8" height="1.7" fill="#9cdcfe"/><rect x="16" y="360.1" width="1" height="1.7" fill="#d4d4d4"/><rect x="17" y="360.1" width="14" height="1.7" fill="#dcdcaa"/><rect x="31" y="360.1" width="1" height="1.7" fill="#d4d4d4"/><rect x="32" y="360.1" width="12" height="1.7" fill="#ce9178"/><rect x="44" y="360.1" width="1" height="1.7" fill="#d4d4d4"/><rect x="45" y="360.1" width="1" height="1.7" fill="#d4d4d4"/><rect x="46" y="360.1" width="9" height="1.7" fill="#9cdcfe"/><rect x="56" y="360.1" width="1" height="1.7" fill="#d4d4d4"/><rect x="58" y="360.1" width="5" height="1.7" fill="#4fc1ff"/><rect x="63" y="360.1" width="1" height="1.7" fill="#d4d4d4"/><rect x="8" y="362.1" width="8" height="1.7" fill="#9cdcfe"/><rect x="16" y="362.1" width="1" height="1.7" fill="#d4d4d4"/><rect x="17" y="362.1" width="14" height="1.7" fill="#dcdcaa"/><rect x="31" y="362.1" width="1" height="1.7" fill="#d4d4d4"/><rect x="32" y="362.1" width="12" height="1.7" fill="#ce9178"/><rect x="44" y="362.1" width="1" height="1.7" fill="#d4d4d4"/><rect x="45" y="362.1" width="1" height="1.7" fill="#d4d4d4"/><rect x="46" y="362.1" width="11" height="1.7" fill="#9cdcfe"/><rect x="58" y="362.1" width="1" height="1.7" fill="#d4d4d4"/><rect x="60" y="362.1" width="4" height="1.7" fill="#4fc1ff"/><rect x="64" y="362.1" width="1" height="1.7" fill="#d4d4d4"/><rect x="65" y="362.1" width="6" height="1.7" fill="#9cdcfe"/><rect x="71" y="362.1" width="1" height="1.7" fill="#d4d4d4"/><rect x="4" y="364.1" width="1" height="1.7" fill="#d4d4d4"/><rect x="4" y="368.1" width="12" height="1.7" fill="#dcdcaa"/><rect x="16" y="368.1" width="1" height="1.7" fill="#d4d4d4"/><rect x="17" y="368.1" width="7" height="1.7" fill="#9cdcfe"/><rect x="24" y="368.1" width="1" height="1.7" fill="#d4d4d4"/><rect x="26" y="368.1" width="1" height="1.7" fill="#d4d4d4"/><rect x="8" y="370.1" width="8" height="1.7" fill="#9cdcfe"/><rect x="16" y="370.1" width="1" height="1.7" fill="#d4d4d4"/><rect x="17" y="370.1" width="14" height="1.7" fill="#dcdcaa"/><rect x="31" y="370.1" width="1" height="1.7" fill="#d4d4d4"/><rect x="32" y="370.1" width="12" height="1.7" fill="#ce9178"/><rect x="44" y="370.1" width="1" height="1.7" fill="#d4d4d4"/><rect x="45" y="370.1" width="1" height="1.7" fill="#d4d4d4"/><rect x="46" y="370.1" width="11" height="1.7" fill="#9cdcfe"/><rect x="58" y="370.1" width="1" height="1.7" fill="#d4d4d4"/><rect x="60" y="370.1" width="7" height="1.7" fill="#9cdcfe"/><rect x="67" y="370.1" width="1" height="1.7" fill="#d4d4d4"/><rect x="4" y="372.1" width="1" height="1.7" fill="#d4d4d4"/><rect x="4" y="376.1" width="16" height="1.7" fill="#dcdcaa"/><rect x="20" y="376.1" width="1" height="1.7" fill="#d4d4d4"/><rect x="21" y="376.1" width="7" height="1.7" fill="#9cdcfe"/><rect x="28" y="376.1" width="1" height="1.7" fill="#d4d4d4"/><rect x="30" y="376.1" width="4" height="1.7" fill="#9cdcfe"/><rect x="35" y="376.1" width="1" height="1.7" fill="#d4d4d4"/><rect x="37" y="376.1" width="6" height="1.7" fill="#ce9178"/><rect x="43" y="376.1" width="1" height="1.7" fill="#d4d4d4"/><rect x="45" y="376.1" width="1" height="1.7" fill="#d4d4d4"/><rect x="8" y="378.1" width="2" height="1.7" fill="#6a9955"/><rect x="11" y="378.1" width="6" height="1.7" fill="#6a9955"/><rect x="18" y="378.1" width="12" height="1.7" fill="#6a9955"/><rect x="31" y="378.1" width="14" height="1.7" fill="#6a9955"/><rect x="8" y="380.1" width="7" height="1.7" fill="#9cdcfe"/><rect x="15" y="380.1" width="1" height="1.7" fill="#d4d4d4"/><rect x="16" y="380.1" width="3" height="1.7" fill="#dcdcaa"/><rect x="19" y="380.1" width="1" height="1.7" fill="#d4d4d4"/><rect x="20" y="380.1" width="1" height="1.7" fill="#ce9178"/><rect x="21" y="380.1" width="2" height="1.7" fill="#569cd6"/><rect x="23" y="380.1" width="4" height="1.7" fill="#9cdcfe"/><rect x="27" y="380.1" width="1" height="1.7" fill="#569cd6"/><rect x="28" y="380.1" width="1" height="1.7" fill="#ce9178"/><rect x="30" y="380.1" width="2" height="1.7" fill="#569cd6"/><rect x="32" y="380.1" width="7" height="1.7" fill="#9cdcfe"/><rect x="39" y="380.1" width="1" height="1.7" fill="#569cd6"/><rect x="40" y="380.1" width="1" height="1.7" fill="#ce9178"/><rect x="41" y="380.1" width="1" height="1.7" fill="#d4d4d4"/><rect x="42" y="380.1" width="1" height="1.7" fill="#d4d4d4"/><rect x="4" y="382.1" width="1" height="1.7" fill="#d4d4d4"/><rect x="4" y="386.1" width="10" height="1.7" fill="#dcdcaa"/><rect x="14" y="386.1" width="1" height="1.7" fill="#d4d4d4"/><rect x="15" y="386.1" width="10" height="1.7" fill="#9cdcfe"/><rect x="25" y="386.1" width="1" height="1.7" fill="#d4d4d4"/><rect x="27" y="386.1" width="1" height="1.7" fill="#d4d4d4"/><rect x="8" y="388.1" width="6" height="1.7" fill="#c586c0"/><rect x="15" y="388.1" width="3" height="1.7" fill="#569cd6"/><rect x="19" y="388.1" width="4" height="1.7" fill="#4ec9b0"/><rect x="23" y="388.1" width="1" height="1.7" fill="#d4d4d4"/><rect x="24" y="388.1" width="10" height="1.7" fill="#9cdcfe"/><rect x="34" y="388.1" width="1" height="1.7" fill="#d4d4d4"/><rect x="35" y="388.1" width="1" height="1.7" fill="#d4d4d4"/><rect x="36" y="388.1" width="18" height="1.7" fill="#dcdcaa"/><rect x="54" y="388.1" width="1" height="1.7" fill="#d4d4d4"/><rect x="55" y="388.1" width="7" height="1.7" fill="#ce9178"/><rect x="62" y="388.1" width="1" height="1.7" fill="#d4d4d4"/><rect x="64" y="388.1" width="1" height="1.7" fill="#d4d4d4"/><rect x="12" y="390.1" width="7" height="1.7" fill="#9cdcfe"/><rect x="19" y="390.1" width="1" height="1.7" fill="#d4d4d4"/><rect x="21" y="390.1" width="7" height="1.7" fill="#ce9178"/><rect x="28" y="390.1" width="1" height="1.7" fill="#d4d4d4"/><rect x="12" y="392.1" width="5" height="1.7" fill="#9cdcfe"/><rect x="17" y="392.1" width="1" height="1.7" fill="#d4d4d4"/><rect x="19" y="392.1" width="7" height="1.7" fill="#ce9178"/><rect x="26" y="392.1" width="1" height="1.7" fill="#d4d4d4"/><rect x="12" y="394.1" width="3" height="1.7" fill="#4fc1ff"/><rect x="15" y="394.1" width="1" height="1.7" fill="#d4d4d4"/><rect x="17" y="394.1" width="9" height="1.7" fill="#ce9178"/><rect x="8" y="396.1" width="1" height="1.7" fill="#d4d4d4"/><rect x="9" y="396.1" width="1" height="1.7" fill="#d4d4d4"/><rect x="10" y="396.1" width="1" height="1.7" fill="#d4d4d4"/><rect x="4" y="398.1" width="1" height="1.7" fill="#d4d4d4"/><rect x="4" y="402.1" width="12" height="1.7" fill="#dcdcaa"/><rect x="16" y="402.1" width="1" height="1.7" fill="#d4d4d4"/><rect x="17" y="402.1" width="4" height="1.7" fill="#9cdcfe"/><rect x="21" y="402.1" width="1" height="1.7" fill="#d4d4d4"/><rect x="23" y="402.1" width="9" height="1.7" fill="#9cdcfe"/><rect x="32" y="402.1" width="1" height="1.7" fill="#d4d4d4"/><rect x="34" y="402.1" width="1" height="1.7" fill="#d4d4d4"/><rect x="8" y="404.1" width="6" height="1.7" fill="#c586c0"/><rect x="15" y="404.1" width="4" height="1.7" fill="#9cdcfe"/><rect x="19" y="404.1" width="1" height="1.7" fill="#d4d4d4"/><rect x="20" y="404.1" width="6" height="1.7" fill="#9cdcfe"/><rect x="27" y="404.1" width="1" height="1.7" fill="#d4d4d4"/><rect x="29" y="404.1" width="9" height="1.7" fill="#9cdcfe"/><rect x="39" y="404.1" width="1" height="1.7" fill="#d4d4d4"/><rect x="41" y="404.1" width="4" height="1.7" fill="#9cdcfe"/><rect x="45" y="404.1" width="1" height="1.7" fill="#d4d4d4"/><rect x="46" y="404.1" width="9" height="1.7" fill="#dcdcaa"/><rect x="55" y="404.1" width="1" height="1.7" fill="#d4d4d4"/><rect x="56" y="404.1" width="1" height="1.7" fill="#b5cea8"/><rect x="57" y="404.1" width="1" height="1.7" fill="#d4d4d4"/><rect x="59" y="404.1" width="9" height="1.7" fill="#9cdcfe"/><rect x="68" y="404.1" width="1" height="1.7" fill="#d4d4d4"/><rect x="70" y="404.1" width="1" height="1.7" fill="#d4d4d4"/><rect x="72" y="404.1" width="5" height="1.7" fill="#ce9178"/><rect x="78" y="404.1" width="1" height="1.7" fill="#d4d4d4"/><rect x="80" y="404.1" width="4" height="1.7" fill="#9cdcfe"/><rect x="84" y="404.1" width="1" height="1.7" fill="#d4d4d4"/><rect x="4" y="406.1" width="1" height="1.7" fill="#d4d4d4"/><rect x="0" y="408.1" width="1" height="1.7" fill="#d4d4d4"/><rect x="0" y="412.1" width="2" height="1.7" fill="#6a9955"/><rect x="3" y="412.1" width="10" height="1.7" fill="#6a9955"/><rect x="14" y="412.1" width="3" height="1.7" fill="#6a9955"/><rect x="18" y="412.1" width="3" height="1.7" fill="#6a9955"/><rect x="0" y="414.1" width="5" height="1.7" fill="#569cd6"/><rect x="6" y="414.1" width="3" height="1.7" fill="#4fc1ff"/><rect x="10" y="414.1" width="1" height="1.7" fill="#d4d4d4"/><rect x="12" y="414.1" width="3" height="1.7" fill="#569cd6"/><rect x="16" y="414.1" width="14" height="1.7" fill="#4ec9b0"/><rect x="30" y="414.1" width="1" height="1.7" fill="#d4d4d4"/><rect x="31" y="414.1" width="1" height="1.7" fill="#d4d4d4"/><rect x="32" y="414.1" width="1" height="1.7" fill="#d4d4d4"/></g></svg>
<div class="box" style="left:1904px;top:88px;width:1px;height:992px;background:#2b2b2b;opacity:0.4"></div>
<div class="box" style="left:1904px;top:115px;width:16px;height:168px;background:#434343"></div>
<div class="box" style="left:1905px;top:122px;width:15px;height:2px;background:#a0a0a0"></div>
<svg class="ic" style="left:30px;top:964px" width="92" height="92" viewBox="0 0 92 92">
<defs>
<linearGradient id="tdg" x1="0" y1="0" x2="1" y2="1"><stop offset="0" stop-color="#a00808"/><stop offset="0.45" stop-color="#c20d0d"/><stop offset="0.7" stop-color="#d01010"/><stop offset="1" stop-color="#9a0707"/></linearGradient>
</defs>
<circle cx="46.2" cy="45.4" r="43" fill="#b00909"/>
<circle cx="46.2" cy="45.4" r="40.3" fill="none" stroke="#f4f4f4" stroke-width="1.9"/>
<circle cx="46.2" cy="45.4" r="39.4" fill="url(#tdg)"/>
<path d="M12 50 C25 38 38 58 58 47 S 80 55 85 50 L82 68 C70 82 30 86 14 70z" fill="#7e0505" opacity="0.22"/>
<path d="M19.2 28.1H43.9V37.9H37.9V63.5H24.7V37.9H19.2Z" fill="#ececec" stroke="#4a0505" stroke-width="0.8"/>
<path d="M45.1 28.1H60C70 28.1 75.8 35.5 75.8 45.8 75.8 56.1 70 63.5 60 63.5H45.1ZM52 33.6V58.8H58.5C65.5 58.8 69.8 53.6 69.8 45.8 69.8 38 65.5 33.6 58.5 33.6Z" fill="#ececec" fill-rule="evenodd" stroke="#4a0505" stroke-width="0.8"/>
<path d="M23.5 31.5H40M29.5 32V60" stroke="#6a1010" stroke-width="0.6" opacity="0.5"/>
<path d="M52.5 58.5H59C66 58.5 70 53 70 45.5" stroke="#300303" stroke-width="1.6" fill="none"/>
</svg>
</body></html>
